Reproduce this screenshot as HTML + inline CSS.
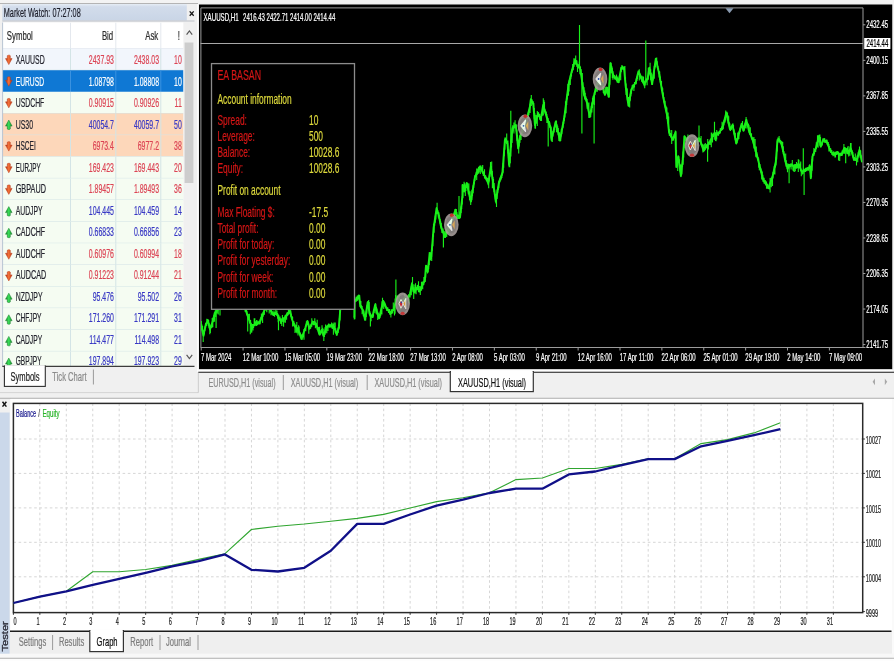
<!DOCTYPE html>
<html lang="en">
<head>
<meta charset="utf-8">
<title>Strategy Tester - XAUUSD,H1</title>
<style>
html,body{margin:0;padding:0;background:#f0f0f0;overflow:hidden}
svg{display:block;font-family:'Liberation Sans', sans-serif;will-change:transform}
</style>
</head>
<body>
<svg width="894" height="661" viewBox="0 0 894 661">
<rect x="0.00" y="0.00" width="894.00" height="661.00" fill="#f0f0f0"/>
<rect x="0.00" y="0.00" width="894.00" height="3.20" fill="#f3f3f3"/>
<line x1="0.00" y1="3.50" x2="198.00" y2="3.50" stroke="#b4b4b4" stroke-width="1"/>
<defs><linearGradient id="tb" x1="0" y1="0" x2="0" y2="1"><stop offset="0" stop-color="#e6edf5"/><stop offset="0.17" stop-color="#d2dceb"/><stop offset="1" stop-color="#c9d5e6"/></linearGradient></defs>
<rect x="2.30" y="4.00" width="184.50" height="16.50" fill="url(#tb)"/>
<line x1="2.30" y1="21.00" x2="194.50" y2="21.00" stroke="#bcc0c8" stroke-width="1"/>
<text x="3.80" y="16.98" textLength="76.90" lengthAdjust="spacingAndGlyphs" font-size="13" fill="#1c1e2a" stroke="#1c1e2a" stroke-width="0.22">Market Watch: 07:27:08</text>
<path d="M189.7,11.4 L193.7,15.8 M193.7,11.4 L189.7,15.8" stroke="#151515" stroke-width="1.3" fill="none"/>
<rect x="2.30" y="22.50" width="181.30" height="343.50" fill="#ffffff"/>
<defs><linearGradient id="ad" x1="0" y1="0" x2="1" y2="0"><stop offset="0" stop-color="#b8300e"/><stop offset="0.5" stop-color="#f6743a"/><stop offset="1" stop-color="#b8300e"/></linearGradient><linearGradient id="au" x1="0" y1="0" x2="1" y2="0"><stop offset="0" stop-color="#148a2c"/><stop offset="0.5" stop-color="#3be05a"/><stop offset="1" stop-color="#148a2c"/></linearGradient><clipPath id="tbclip"><rect x="2.3" y="22.5" width="181.29999999999998" height="343.5"/></clipPath></defs>
<g clip-path="url(#tbclip)">
<text transform="translate(6.80,40.09) scale(0.6,1)" font-size="13" fill="#2a2a2a" stroke="#2a2a2a" stroke-width="0.22">Symbol</text>
<text transform="translate(113.20,40.09) scale(0.6,1)" font-size="13" fill="#2a2a2a" text-anchor="end" stroke="#2a2a2a" stroke-width="0.22">Bid</text>
<text transform="translate(158.20,40.09) scale(0.6,1)" font-size="13" fill="#2a2a2a" text-anchor="end" stroke="#2a2a2a" stroke-width="0.22">Ask</text>
<text transform="translate(180.00,40.09) scale(0.6,1)" font-size="13" fill="#2a2a2a" text-anchor="end" stroke="#2a2a2a" stroke-width="0.22">!</text>
<line x1="70.50" y1="22.50" x2="70.50" y2="48.60" stroke="#e4e8ee" stroke-width="1"/>
<line x1="115.80" y1="22.50" x2="115.80" y2="48.60" stroke="#e4e8ee" stroke-width="1"/>
<line x1="160.80" y1="22.50" x2="160.80" y2="48.60" stroke="#e4e8ee" stroke-width="1"/>
<line x1="2.30" y1="48.60" x2="183.60" y2="48.60" stroke="#e0e6ee" stroke-width="1"/>
<rect x="2.30" y="48.60" width="181.30" height="21.63" fill="#f2f6fc"/>
<line x1="2.30" y1="70.23" x2="183.60" y2="70.23" stroke="#d3e4e6" stroke-width="1"/>
<line x1="70.50" y1="48.60" x2="70.50" y2="70.23" stroke="#d3e4e6" stroke-width="1"/>
<line x1="115.80" y1="48.60" x2="115.80" y2="70.23" stroke="#d3e4e6" stroke-width="1"/>
<line x1="160.80" y1="48.60" x2="160.80" y2="70.23" stroke="#d3e4e6" stroke-width="1"/>
<polygon points="7.30,55.70 8.00,55.20 9.60,55.20 10.30,55.70 10.30,58.60 12.10,58.60 8.80,64.60 5.50,58.60 7.30,58.60" fill="url(#ad)" stroke="#b83a1c" stroke-width="0.5" stroke-linejoin="round"/>
<text x="15.70" y="64.09" textLength="29.00" lengthAdjust="spacingAndGlyphs" font-size="13" fill="#24242e" stroke="#24242e" stroke-width="0.22">XAUUSD</text>
<text transform="translate(113.90,64.09) scale(0.535,1)" font-size="13" fill="#dc4454" text-anchor="end" stroke="#dc4454" stroke-width="0.22">2437.93</text>
<text transform="translate(159.00,64.09) scale(0.535,1)" font-size="13" fill="#dc4454" text-anchor="end" stroke="#dc4454" stroke-width="0.22">2438.03</text>
<text transform="translate(181.80,64.09) scale(0.535,1)" font-size="13" fill="#dc4454" text-anchor="end" stroke="#dc4454" stroke-width="0.22">10</text>
<rect x="2.30" y="70.23" width="181.30" height="21.63" fill="#0f78d4"/>
<line x1="70.50" y1="70.23" x2="70.50" y2="91.86" stroke="#3a92e0" stroke-width="1"/>
<line x1="115.80" y1="70.23" x2="115.80" y2="91.86" stroke="#3a92e0" stroke-width="1"/>
<line x1="160.80" y1="70.23" x2="160.80" y2="91.86" stroke="#3a92e0" stroke-width="1"/>
<polygon points="7.30,77.33 8.00,76.83 9.60,76.83 10.30,77.33 10.30,80.23 12.10,80.23 8.80,86.23 5.50,80.23 7.30,80.23" fill="url(#ad)" stroke="#b83a1c" stroke-width="0.5" stroke-linejoin="round"/>
<text x="15.70" y="85.61" textLength="28.30" lengthAdjust="spacingAndGlyphs" font-size="13" fill="#ffffff" stroke="#ffffff" stroke-width="0.22">EURUSD</text>
<text transform="translate(113.90,85.61) scale(0.535,1)" font-size="13" fill="#ffffff" text-anchor="end" stroke="#ffffff" stroke-width="0.22">1.08798</text>
<text transform="translate(159.00,85.61) scale(0.535,1)" font-size="13" fill="#ffffff" text-anchor="end" stroke="#ffffff" stroke-width="0.22">1.08808</text>
<text transform="translate(181.80,85.61) scale(0.535,1)" font-size="13" fill="#ffffff" text-anchor="end" stroke="#ffffff" stroke-width="0.22">10</text>
<rect x="2.30" y="91.86" width="181.30" height="21.63" fill="#f5fcf2"/>
<line x1="2.30" y1="113.49" x2="183.60" y2="113.49" stroke="#d3e4e6" stroke-width="1"/>
<line x1="70.50" y1="91.86" x2="70.50" y2="113.49" stroke="#d3e4e6" stroke-width="1"/>
<line x1="115.80" y1="91.86" x2="115.80" y2="113.49" stroke="#d3e4e6" stroke-width="1"/>
<line x1="160.80" y1="91.86" x2="160.80" y2="113.49" stroke="#d3e4e6" stroke-width="1"/>
<polygon points="7.30,98.96 8.00,98.46 9.60,98.46 10.30,98.96 10.30,101.86 12.10,101.86 8.80,107.86 5.50,101.86 7.30,101.86" fill="url(#ad)" stroke="#b83a1c" stroke-width="0.5" stroke-linejoin="round"/>
<text x="15.70" y="107.12" textLength="28.60" lengthAdjust="spacingAndGlyphs" font-size="13" fill="#24242e" stroke="#24242e" stroke-width="0.22">USDCHF</text>
<text transform="translate(113.90,107.12) scale(0.535,1)" font-size="13" fill="#dc4454" text-anchor="end" stroke="#dc4454" stroke-width="0.22">0.90915</text>
<text transform="translate(159.00,107.12) scale(0.535,1)" font-size="13" fill="#dc4454" text-anchor="end" stroke="#dc4454" stroke-width="0.22">0.90926</text>
<text transform="translate(181.80,107.12) scale(0.535,1)" font-size="13" fill="#dc4454" text-anchor="end" stroke="#dc4454" stroke-width="0.22">11</text>
<rect x="2.30" y="113.49" width="181.30" height="21.63" fill="#fdd7ba"/>
<line x1="2.30" y1="135.12" x2="183.60" y2="135.12" stroke="#d3e4e6" stroke-width="1"/>
<line x1="70.50" y1="113.49" x2="70.50" y2="135.12" stroke="#d3e4e6" stroke-width="1"/>
<line x1="115.80" y1="113.49" x2="115.80" y2="135.12" stroke="#d3e4e6" stroke-width="1"/>
<line x1="160.80" y1="113.49" x2="160.80" y2="135.12" stroke="#d3e4e6" stroke-width="1"/>
<polygon points="7.30,128.99 8.00,129.49 9.60,129.49 10.30,128.99 10.30,126.09 12.10,126.09 8.80,120.09 5.50,126.09 7.30,126.09" fill="url(#au)" stroke="#1a7a2c" stroke-width="0.5" stroke-linejoin="round"/>
<text x="15.70" y="128.65" textLength="17.40" lengthAdjust="spacingAndGlyphs" font-size="13" fill="#24242e" stroke="#24242e" stroke-width="0.22">US30</text>
<text transform="translate(113.90,128.65) scale(0.535,1)" font-size="13" fill="#3838c4" text-anchor="end" stroke="#3838c4" stroke-width="0.22">40054.7</text>
<text transform="translate(159.00,128.65) scale(0.535,1)" font-size="13" fill="#3838c4" text-anchor="end" stroke="#3838c4" stroke-width="0.22">40059.7</text>
<text transform="translate(181.80,128.65) scale(0.535,1)" font-size="13" fill="#3838c4" text-anchor="end" stroke="#3838c4" stroke-width="0.22">50</text>
<rect x="2.30" y="135.12" width="181.30" height="21.63" fill="#fdd7ba"/>
<line x1="2.30" y1="156.75" x2="183.60" y2="156.75" stroke="#d3e4e6" stroke-width="1"/>
<line x1="70.50" y1="135.12" x2="70.50" y2="156.75" stroke="#d3e4e6" stroke-width="1"/>
<line x1="115.80" y1="135.12" x2="115.80" y2="156.75" stroke="#d3e4e6" stroke-width="1"/>
<line x1="160.80" y1="135.12" x2="160.80" y2="156.75" stroke="#d3e4e6" stroke-width="1"/>
<polygon points="7.30,142.22 8.00,141.72 9.60,141.72 10.30,142.22 10.30,145.12 12.10,145.12 8.80,151.12 5.50,145.12 7.30,145.12" fill="url(#ad)" stroke="#b83a1c" stroke-width="0.5" stroke-linejoin="round"/>
<text x="15.70" y="150.17" textLength="20.10" lengthAdjust="spacingAndGlyphs" font-size="13" fill="#24242e" stroke="#24242e" stroke-width="0.22">HSCEI</text>
<text transform="translate(113.90,150.17) scale(0.535,1)" font-size="13" fill="#dc4454" text-anchor="end" stroke="#dc4454" stroke-width="0.22">6973.4</text>
<text transform="translate(159.00,150.17) scale(0.535,1)" font-size="13" fill="#dc4454" text-anchor="end" stroke="#dc4454" stroke-width="0.22">6977.2</text>
<text transform="translate(181.80,150.17) scale(0.535,1)" font-size="13" fill="#dc4454" text-anchor="end" stroke="#dc4454" stroke-width="0.22">38</text>
<rect x="2.30" y="156.75" width="181.30" height="21.63" fill="#f5fcf2"/>
<line x1="2.30" y1="178.38" x2="183.60" y2="178.38" stroke="#d3e4e6" stroke-width="1"/>
<line x1="70.50" y1="156.75" x2="70.50" y2="178.38" stroke="#d3e4e6" stroke-width="1"/>
<line x1="115.80" y1="156.75" x2="115.80" y2="178.38" stroke="#d3e4e6" stroke-width="1"/>
<line x1="160.80" y1="156.75" x2="160.80" y2="178.38" stroke="#d3e4e6" stroke-width="1"/>
<polygon points="7.30,163.85 8.00,163.35 9.60,163.35 10.30,163.85 10.30,166.75 12.10,166.75 8.80,172.75 5.50,166.75 7.30,166.75" fill="url(#ad)" stroke="#b83a1c" stroke-width="0.5" stroke-linejoin="round"/>
<text x="15.70" y="171.69" textLength="25.00" lengthAdjust="spacingAndGlyphs" font-size="13" fill="#24242e" stroke="#24242e" stroke-width="0.22">EURJPY</text>
<text transform="translate(113.90,171.69) scale(0.535,1)" font-size="13" fill="#dc4454" text-anchor="end" stroke="#dc4454" stroke-width="0.22">169.423</text>
<text transform="translate(159.00,171.69) scale(0.535,1)" font-size="13" fill="#dc4454" text-anchor="end" stroke="#dc4454" stroke-width="0.22">169.443</text>
<text transform="translate(181.80,171.69) scale(0.535,1)" font-size="13" fill="#dc4454" text-anchor="end" stroke="#dc4454" stroke-width="0.22">20</text>
<rect x="2.30" y="178.38" width="181.30" height="21.63" fill="#f5fcf2"/>
<line x1="2.30" y1="200.01" x2="183.60" y2="200.01" stroke="#d3e4e6" stroke-width="1"/>
<line x1="70.50" y1="178.38" x2="70.50" y2="200.01" stroke="#d3e4e6" stroke-width="1"/>
<line x1="115.80" y1="178.38" x2="115.80" y2="200.01" stroke="#d3e4e6" stroke-width="1"/>
<line x1="160.80" y1="178.38" x2="160.80" y2="200.01" stroke="#d3e4e6" stroke-width="1"/>
<polygon points="7.30,185.48 8.00,184.98 9.60,184.98 10.30,185.48 10.30,188.38 12.10,188.38 8.80,194.38 5.50,188.38 7.30,188.38" fill="url(#ad)" stroke="#b83a1c" stroke-width="0.5" stroke-linejoin="round"/>
<text x="15.70" y="193.20" textLength="30.20" lengthAdjust="spacingAndGlyphs" font-size="13" fill="#24242e" stroke="#24242e" stroke-width="0.22">GBPAUD</text>
<text transform="translate(113.90,193.20) scale(0.535,1)" font-size="13" fill="#dc4454" text-anchor="end" stroke="#dc4454" stroke-width="0.22">1.89457</text>
<text transform="translate(159.00,193.20) scale(0.535,1)" font-size="13" fill="#dc4454" text-anchor="end" stroke="#dc4454" stroke-width="0.22">1.89493</text>
<text transform="translate(181.80,193.20) scale(0.535,1)" font-size="13" fill="#dc4454" text-anchor="end" stroke="#dc4454" stroke-width="0.22">36</text>
<rect x="2.30" y="200.01" width="181.30" height="21.63" fill="#f5fcf2"/>
<line x1="2.30" y1="221.64" x2="183.60" y2="221.64" stroke="#d3e4e6" stroke-width="1"/>
<line x1="70.50" y1="200.01" x2="70.50" y2="221.64" stroke="#d3e4e6" stroke-width="1"/>
<line x1="115.80" y1="200.01" x2="115.80" y2="221.64" stroke="#d3e4e6" stroke-width="1"/>
<line x1="160.80" y1="200.01" x2="160.80" y2="221.64" stroke="#d3e4e6" stroke-width="1"/>
<polygon points="7.30,215.51 8.00,216.01 9.60,216.01 10.30,215.51 10.30,212.61 12.10,212.61 8.80,206.61 5.50,212.61 7.30,212.61" fill="url(#au)" stroke="#1a7a2c" stroke-width="0.5" stroke-linejoin="round"/>
<text x="15.70" y="214.72" textLength="26.80" lengthAdjust="spacingAndGlyphs" font-size="13" fill="#24242e" stroke="#24242e" stroke-width="0.22">AUDJPY</text>
<text transform="translate(113.90,214.72) scale(0.535,1)" font-size="13" fill="#3838c4" text-anchor="end" stroke="#3838c4" stroke-width="0.22">104.445</text>
<text transform="translate(159.00,214.72) scale(0.535,1)" font-size="13" fill="#3838c4" text-anchor="end" stroke="#3838c4" stroke-width="0.22">104.459</text>
<text transform="translate(181.80,214.72) scale(0.535,1)" font-size="13" fill="#3838c4" text-anchor="end" stroke="#3838c4" stroke-width="0.22">14</text>
<rect x="2.30" y="221.64" width="181.30" height="21.63" fill="#f5fcf2"/>
<line x1="2.30" y1="243.27" x2="183.60" y2="243.27" stroke="#d3e4e6" stroke-width="1"/>
<line x1="70.50" y1="221.64" x2="70.50" y2="243.27" stroke="#d3e4e6" stroke-width="1"/>
<line x1="115.80" y1="221.64" x2="115.80" y2="243.27" stroke="#d3e4e6" stroke-width="1"/>
<line x1="160.80" y1="221.64" x2="160.80" y2="243.27" stroke="#d3e4e6" stroke-width="1"/>
<polygon points="7.30,237.14 8.00,237.64 9.60,237.64 10.30,237.14 10.30,234.24 12.10,234.24 8.80,228.24 5.50,234.24 7.30,234.24" fill="url(#au)" stroke="#1a7a2c" stroke-width="0.5" stroke-linejoin="round"/>
<text x="15.70" y="236.25" textLength="29.50" lengthAdjust="spacingAndGlyphs" font-size="13" fill="#24242e" stroke="#24242e" stroke-width="0.22">CADCHF</text>
<text transform="translate(113.90,236.25) scale(0.535,1)" font-size="13" fill="#3838c4" text-anchor="end" stroke="#3838c4" stroke-width="0.22">0.66833</text>
<text transform="translate(159.00,236.25) scale(0.535,1)" font-size="13" fill="#3838c4" text-anchor="end" stroke="#3838c4" stroke-width="0.22">0.66856</text>
<text transform="translate(181.80,236.25) scale(0.535,1)" font-size="13" fill="#3838c4" text-anchor="end" stroke="#3838c4" stroke-width="0.22">23</text>
<rect x="2.30" y="243.27" width="181.30" height="21.63" fill="#f5fcf2"/>
<line x1="2.30" y1="264.90" x2="183.60" y2="264.90" stroke="#d3e4e6" stroke-width="1"/>
<line x1="70.50" y1="243.27" x2="70.50" y2="264.90" stroke="#d3e4e6" stroke-width="1"/>
<line x1="115.80" y1="243.27" x2="115.80" y2="264.90" stroke="#d3e4e6" stroke-width="1"/>
<line x1="160.80" y1="243.27" x2="160.80" y2="264.90" stroke="#d3e4e6" stroke-width="1"/>
<polygon points="7.30,250.37 8.00,249.87 9.60,249.87 10.30,250.37 10.30,253.27 12.10,253.27 8.80,259.27 5.50,253.27 7.30,253.27" fill="url(#ad)" stroke="#b83a1c" stroke-width="0.5" stroke-linejoin="round"/>
<text x="15.70" y="257.76" textLength="29.50" lengthAdjust="spacingAndGlyphs" font-size="13" fill="#24242e" stroke="#24242e" stroke-width="0.22">AUDCHF</text>
<text transform="translate(113.90,257.76) scale(0.535,1)" font-size="13" fill="#dc4454" text-anchor="end" stroke="#dc4454" stroke-width="0.22">0.60976</text>
<text transform="translate(159.00,257.76) scale(0.535,1)" font-size="13" fill="#dc4454" text-anchor="end" stroke="#dc4454" stroke-width="0.22">0.60994</text>
<text transform="translate(181.80,257.76) scale(0.535,1)" font-size="13" fill="#dc4454" text-anchor="end" stroke="#dc4454" stroke-width="0.22">18</text>
<rect x="2.30" y="264.90" width="181.30" height="21.63" fill="#f5fcf2"/>
<line x1="2.30" y1="286.53" x2="183.60" y2="286.53" stroke="#d3e4e6" stroke-width="1"/>
<line x1="70.50" y1="264.90" x2="70.50" y2="286.53" stroke="#d3e4e6" stroke-width="1"/>
<line x1="115.80" y1="264.90" x2="115.80" y2="286.53" stroke="#d3e4e6" stroke-width="1"/>
<line x1="160.80" y1="264.90" x2="160.80" y2="286.53" stroke="#d3e4e6" stroke-width="1"/>
<polygon points="7.30,272.00 8.00,271.50 9.60,271.50 10.30,272.00 10.30,274.90 12.10,274.90 8.80,280.90 5.50,274.90 7.30,274.90" fill="url(#ad)" stroke="#b83a1c" stroke-width="0.5" stroke-linejoin="round"/>
<text x="15.70" y="279.28" textLength="30.50" lengthAdjust="spacingAndGlyphs" font-size="13" fill="#24242e" stroke="#24242e" stroke-width="0.22">AUDCAD</text>
<text transform="translate(113.90,279.28) scale(0.535,1)" font-size="13" fill="#dc4454" text-anchor="end" stroke="#dc4454" stroke-width="0.22">0.91223</text>
<text transform="translate(159.00,279.28) scale(0.535,1)" font-size="13" fill="#dc4454" text-anchor="end" stroke="#dc4454" stroke-width="0.22">0.91244</text>
<text transform="translate(181.80,279.28) scale(0.535,1)" font-size="13" fill="#dc4454" text-anchor="end" stroke="#dc4454" stroke-width="0.22">21</text>
<rect x="2.30" y="286.53" width="181.30" height="21.63" fill="#f5fcf2"/>
<line x1="2.30" y1="308.16" x2="183.60" y2="308.16" stroke="#d3e4e6" stroke-width="1"/>
<line x1="70.50" y1="286.53" x2="70.50" y2="308.16" stroke="#d3e4e6" stroke-width="1"/>
<line x1="115.80" y1="286.53" x2="115.80" y2="308.16" stroke="#d3e4e6" stroke-width="1"/>
<line x1="160.80" y1="286.53" x2="160.80" y2="308.16" stroke="#d3e4e6" stroke-width="1"/>
<polygon points="7.30,302.03 8.00,302.53 9.60,302.53 10.30,302.03 10.30,299.13 12.10,299.13 8.80,293.13 5.50,299.13 7.30,299.13" fill="url(#au)" stroke="#1a7a2c" stroke-width="0.5" stroke-linejoin="round"/>
<text x="15.70" y="300.81" textLength="26.80" lengthAdjust="spacingAndGlyphs" font-size="13" fill="#24242e" stroke="#24242e" stroke-width="0.22">NZDJPY</text>
<text transform="translate(113.90,300.81) scale(0.535,1)" font-size="13" fill="#3838c4" text-anchor="end" stroke="#3838c4" stroke-width="0.22">95.476</text>
<text transform="translate(159.00,300.81) scale(0.535,1)" font-size="13" fill="#3838c4" text-anchor="end" stroke="#3838c4" stroke-width="0.22">95.502</text>
<text transform="translate(181.80,300.81) scale(0.535,1)" font-size="13" fill="#3838c4" text-anchor="end" stroke="#3838c4" stroke-width="0.22">26</text>
<rect x="2.30" y="308.16" width="181.30" height="21.63" fill="#f5fcf2"/>
<line x1="2.30" y1="329.79" x2="183.60" y2="329.79" stroke="#d3e4e6" stroke-width="1"/>
<line x1="70.50" y1="308.16" x2="70.50" y2="329.79" stroke="#d3e4e6" stroke-width="1"/>
<line x1="115.80" y1="308.16" x2="115.80" y2="329.79" stroke="#d3e4e6" stroke-width="1"/>
<line x1="160.80" y1="308.16" x2="160.80" y2="329.79" stroke="#d3e4e6" stroke-width="1"/>
<polygon points="7.30,323.66 8.00,324.16 9.60,324.16 10.30,323.66 10.30,320.76 12.10,320.76 8.80,314.76 5.50,320.76 7.30,320.76" fill="url(#au)" stroke="#1a7a2c" stroke-width="0.5" stroke-linejoin="round"/>
<text x="15.70" y="322.33" textLength="25.80" lengthAdjust="spacingAndGlyphs" font-size="13" fill="#24242e" stroke="#24242e" stroke-width="0.22">CHFJPY</text>
<text transform="translate(113.90,322.33) scale(0.535,1)" font-size="13" fill="#3838c4" text-anchor="end" stroke="#3838c4" stroke-width="0.22">171.260</text>
<text transform="translate(159.00,322.33) scale(0.535,1)" font-size="13" fill="#3838c4" text-anchor="end" stroke="#3838c4" stroke-width="0.22">171.291</text>
<text transform="translate(181.80,322.33) scale(0.535,1)" font-size="13" fill="#3838c4" text-anchor="end" stroke="#3838c4" stroke-width="0.22">31</text>
<rect x="2.30" y="329.79" width="181.30" height="21.63" fill="#f5fcf2"/>
<line x1="2.30" y1="351.42" x2="183.60" y2="351.42" stroke="#d3e4e6" stroke-width="1"/>
<line x1="70.50" y1="329.79" x2="70.50" y2="351.42" stroke="#d3e4e6" stroke-width="1"/>
<line x1="115.80" y1="329.79" x2="115.80" y2="351.42" stroke="#d3e4e6" stroke-width="1"/>
<line x1="160.80" y1="329.79" x2="160.80" y2="351.42" stroke="#d3e4e6" stroke-width="1"/>
<polygon points="7.30,345.29 8.00,345.79 9.60,345.79 10.30,345.29 10.30,342.39 12.10,342.39 8.80,336.39 5.50,342.39 7.30,342.39" fill="url(#au)" stroke="#1a7a2c" stroke-width="0.5" stroke-linejoin="round"/>
<text x="15.70" y="343.85" textLength="26.50" lengthAdjust="spacingAndGlyphs" font-size="13" fill="#24242e" stroke="#24242e" stroke-width="0.22">CADJPY</text>
<text transform="translate(113.90,343.85) scale(0.535,1)" font-size="13" fill="#3838c4" text-anchor="end" stroke="#3838c4" stroke-width="0.22">114.477</text>
<text transform="translate(159.00,343.85) scale(0.535,1)" font-size="13" fill="#3838c4" text-anchor="end" stroke="#3838c4" stroke-width="0.22">114.498</text>
<text transform="translate(181.80,343.85) scale(0.535,1)" font-size="13" fill="#3838c4" text-anchor="end" stroke="#3838c4" stroke-width="0.22">21</text>
<rect x="2.30" y="351.42" width="181.30" height="21.63" fill="#f5fcf2"/>
<line x1="2.30" y1="373.05" x2="183.60" y2="373.05" stroke="#d3e4e6" stroke-width="1"/>
<line x1="70.50" y1="351.42" x2="70.50" y2="373.05" stroke="#d3e4e6" stroke-width="1"/>
<line x1="115.80" y1="351.42" x2="115.80" y2="373.05" stroke="#d3e4e6" stroke-width="1"/>
<line x1="160.80" y1="351.42" x2="160.80" y2="373.05" stroke="#d3e4e6" stroke-width="1"/>
<polygon points="7.30,366.92 8.00,367.42 9.60,367.42 10.30,366.92 10.30,364.02 12.10,364.02 8.80,358.02 5.50,364.02 7.30,364.02" fill="url(#au)" stroke="#1a7a2c" stroke-width="0.5" stroke-linejoin="round"/>
<text x="15.70" y="365.37" textLength="25.80" lengthAdjust="spacingAndGlyphs" font-size="13" fill="#24242e" stroke="#24242e" stroke-width="0.22">GBPJPY</text>
<text transform="translate(113.90,365.37) scale(0.535,1)" font-size="13" fill="#3838c4" text-anchor="end" stroke="#3838c4" stroke-width="0.22">197.894</text>
<text transform="translate(159.00,365.37) scale(0.535,1)" font-size="13" fill="#3838c4" text-anchor="end" stroke="#3838c4" stroke-width="0.22">197.923</text>
<text transform="translate(181.80,365.37) scale(0.535,1)" font-size="13" fill="#3838c4" text-anchor="end" stroke="#3838c4" stroke-width="0.22">29</text>
</g>
<line x1="2.60" y1="22.50" x2="2.60" y2="366.00" stroke="#b8c4d2" stroke-width="1"/>
<rect x="183.60" y="22.50" width="10.60" height="343.50" fill="#f0f0f0"/>
<rect x="184.60" y="42.50" width="8.80" height="140.50" fill="#cdcdcd"/>
<polyline points="186.6,34.6 189.4,31.0 192.2,34.6" fill="none" stroke="#555" stroke-width="1.2"/>
<polyline points="186.6,354.9 189.4,358.5 192.2,354.9" fill="none" stroke="#555" stroke-width="1.2"/>
<line x1="2.30" y1="366.30" x2="194.50" y2="366.30" stroke="#3c3c3c" stroke-width="1.2"/>
<rect x="4.40" y="366.00" width="40.90" height="20.40" fill="#ffffff" stroke="#2e2e2e" stroke-width="1.1"/>
<rect x="5.00" y="365.20" width="39.70" height="1.80" fill="#ffffff"/>
<text transform="translate(10.50,380.79) scale(0.585,1)" font-size="13" fill="#222" stroke="#222" stroke-width="0.22">Symbols</text>
<text transform="translate(52.30,380.79) scale(0.585,1)" font-size="13" fill="#8a8a8a" stroke="#8a8a8a" stroke-width="0.22">Tick Chart</text>
<line x1="93.40" y1="369.50" x2="93.40" y2="384.50" stroke="#9a9a9a" stroke-width="1"/>
<line x1="197.60" y1="4.00" x2="197.60" y2="392.00" stroke="#fbfbfb" stroke-width="1.2"/>
<line x1="0.00" y1="392.60" x2="198.40" y2="392.60" stroke="#d4d4d4" stroke-width="1"/>
<line x1="198.20" y1="372.00" x2="198.20" y2="392.60" stroke="#c4c4c4" stroke-width="1"/>
<line x1="0.00" y1="398.30" x2="894.00" y2="398.30" stroke="#a2a2a2" stroke-width="1"/>
<rect x="199.00" y="4.50" width="693.50" height="364.90" fill="#000000"/>
<rect x="892.50" y="3.00" width="1.50" height="368.00" fill="#f4f4f4"/>
<rect x="198.40" y="369.40" width="694.10" height="2.40" fill="#fdfdfd"/>
<line x1="198.40" y1="372.30" x2="894.00" y2="372.30" stroke="#1a1a1a" stroke-width="1.1"/>
<line x1="200.90" y1="7.90" x2="863.00" y2="7.90" stroke="#9c9c9c" stroke-width="1"/>
<line x1="200.90" y1="7.90" x2="200.90" y2="347.50" stroke="#9c9c9c" stroke-width="1"/>
<line x1="863.00" y1="7.90" x2="863.00" y2="348.00" stroke="#9c9c9c" stroke-width="1.0"/>
<line x1="200.50" y1="347.50" x2="865.50" y2="347.50" stroke="#9c9c9c" stroke-width="1.1"/>
<polygon points="725.5,8.2 733.5,8.2 729.5,13.2" fill="#8a9bb0"/>
<line x1="200.50" y1="43.50" x2="863.00" y2="43.50" stroke="#a8a8a8" stroke-width="1"/>
<text x="203.50" y="20.52" textLength="35.20" lengthAdjust="spacingAndGlyphs" font-size="10.5" fill="#ffffff" stroke="#ffffff" stroke-width="0.22">XAUUSD,H1</text>
<text x="243.10" y="20.52" textLength="92.20" lengthAdjust="spacingAndGlyphs" font-size="10.5" fill="#ffffff" stroke="#ffffff" stroke-width="0.22">2416.43 2422.71 2414.00 2414.44</text>
<line x1="863.00" y1="24.80" x2="865.40" y2="24.80" stroke="#9c9c9c" stroke-width="1"/>
<text transform="translate(866.30,28.42) scale(0.575,1)" font-size="10.5" fill="#ffffff" stroke="#ffffff" stroke-width="0.22">2432.45</text>
<line x1="863.00" y1="60.33" x2="865.40" y2="60.33" stroke="#9c9c9c" stroke-width="1"/>
<text transform="translate(866.30,63.95) scale(0.575,1)" font-size="10.5" fill="#ffffff" stroke="#ffffff" stroke-width="0.22">2400.15</text>
<line x1="863.00" y1="95.86" x2="865.40" y2="95.86" stroke="#9c9c9c" stroke-width="1"/>
<text transform="translate(866.30,99.48) scale(0.575,1)" font-size="10.5" fill="#ffffff" stroke="#ffffff" stroke-width="0.22">2367.85</text>
<line x1="863.00" y1="131.39" x2="865.40" y2="131.39" stroke="#9c9c9c" stroke-width="1"/>
<text transform="translate(866.30,135.01) scale(0.575,1)" font-size="10.5" fill="#ffffff" stroke="#ffffff" stroke-width="0.22">2335.55</text>
<line x1="863.00" y1="166.92" x2="865.40" y2="166.92" stroke="#9c9c9c" stroke-width="1"/>
<text transform="translate(866.30,170.54) scale(0.575,1)" font-size="10.5" fill="#ffffff" stroke="#ffffff" stroke-width="0.22">2303.25</text>
<line x1="863.00" y1="202.45" x2="865.40" y2="202.45" stroke="#9c9c9c" stroke-width="1"/>
<text transform="translate(866.30,206.07) scale(0.575,1)" font-size="10.5" fill="#ffffff" stroke="#ffffff" stroke-width="0.22">2270.95</text>
<line x1="863.00" y1="237.98" x2="865.40" y2="237.98" stroke="#9c9c9c" stroke-width="1"/>
<text transform="translate(866.30,241.60) scale(0.575,1)" font-size="10.5" fill="#ffffff" stroke="#ffffff" stroke-width="0.22">2238.65</text>
<line x1="863.00" y1="273.51" x2="865.40" y2="273.51" stroke="#9c9c9c" stroke-width="1"/>
<text transform="translate(866.30,277.13) scale(0.575,1)" font-size="10.5" fill="#ffffff" stroke="#ffffff" stroke-width="0.22">2206.35</text>
<line x1="863.00" y1="309.04" x2="865.40" y2="309.04" stroke="#9c9c9c" stroke-width="1"/>
<text transform="translate(866.30,312.66) scale(0.575,1)" font-size="10.5" fill="#ffffff" stroke="#ffffff" stroke-width="0.22">2174.05</text>
<line x1="863.00" y1="344.57" x2="865.40" y2="344.57" stroke="#9c9c9c" stroke-width="1"/>
<text transform="translate(866.30,348.19) scale(0.575,1)" font-size="10.5" fill="#ffffff" stroke="#ffffff" stroke-width="0.22">2141.75</text>
<rect x="864.20" y="38.00" width="26.20" height="11.00" fill="#ffffff"/>
<text transform="translate(866.50,47.22) scale(0.575,1)" font-size="10.5" fill="#000000" stroke="#000000" stroke-width="0.22">2414.44</text>
<line x1="201.20" y1="347.50" x2="201.20" y2="350.50" stroke="#9c9c9c" stroke-width="1"/>
<text transform="translate(200.90,361.12) scale(0.574,1)" font-size="10.5" fill="#ffffff" stroke="#ffffff" stroke-width="0.22">7 Mar 2024</text>
<line x1="243.08" y1="347.50" x2="243.08" y2="350.50" stroke="#9c9c9c" stroke-width="1"/>
<text transform="translate(242.78,361.12) scale(0.574,1)" font-size="10.5" fill="#ffffff" stroke="#ffffff" stroke-width="0.22">12 Mar 10:00</text>
<line x1="284.96" y1="347.50" x2="284.96" y2="350.50" stroke="#9c9c9c" stroke-width="1"/>
<text transform="translate(284.66,361.12) scale(0.574,1)" font-size="10.5" fill="#ffffff" stroke="#ffffff" stroke-width="0.22">15 Mar 05:00</text>
<line x1="326.84" y1="347.50" x2="326.84" y2="350.50" stroke="#9c9c9c" stroke-width="1"/>
<text transform="translate(326.54,361.12) scale(0.574,1)" font-size="10.5" fill="#ffffff" stroke="#ffffff" stroke-width="0.22">19 Mar 23:00</text>
<line x1="368.72" y1="347.50" x2="368.72" y2="350.50" stroke="#9c9c9c" stroke-width="1"/>
<text transform="translate(368.42,361.12) scale(0.574,1)" font-size="10.5" fill="#ffffff" stroke="#ffffff" stroke-width="0.22">22 Mar 18:00</text>
<line x1="410.60" y1="347.50" x2="410.60" y2="350.50" stroke="#9c9c9c" stroke-width="1"/>
<text transform="translate(410.30,361.12) scale(0.574,1)" font-size="10.5" fill="#ffffff" stroke="#ffffff" stroke-width="0.22">27 Mar 13:00</text>
<line x1="452.48" y1="347.50" x2="452.48" y2="350.50" stroke="#9c9c9c" stroke-width="1"/>
<text transform="translate(452.18,361.12) scale(0.574,1)" font-size="10.5" fill="#ffffff" stroke="#ffffff" stroke-width="0.22">2 Apr 08:00</text>
<line x1="494.36" y1="347.50" x2="494.36" y2="350.50" stroke="#9c9c9c" stroke-width="1"/>
<text transform="translate(494.06,361.12) scale(0.574,1)" font-size="10.5" fill="#ffffff" stroke="#ffffff" stroke-width="0.22">5 Apr 03:00</text>
<line x1="536.24" y1="347.50" x2="536.24" y2="350.50" stroke="#9c9c9c" stroke-width="1"/>
<text transform="translate(535.94,361.12) scale(0.574,1)" font-size="10.5" fill="#ffffff" stroke="#ffffff" stroke-width="0.22">9 Apr 21:00</text>
<line x1="578.12" y1="347.50" x2="578.12" y2="350.50" stroke="#9c9c9c" stroke-width="1"/>
<text transform="translate(577.82,361.12) scale(0.574,1)" font-size="10.5" fill="#ffffff" stroke="#ffffff" stroke-width="0.22">12 Apr 16:00</text>
<line x1="620.00" y1="347.50" x2="620.00" y2="350.50" stroke="#9c9c9c" stroke-width="1"/>
<text transform="translate(619.70,361.12) scale(0.574,1)" font-size="10.5" fill="#ffffff" stroke="#ffffff" stroke-width="0.22">17 Apr 11:00</text>
<line x1="661.88" y1="347.50" x2="661.88" y2="350.50" stroke="#9c9c9c" stroke-width="1"/>
<text transform="translate(661.58,361.12) scale(0.574,1)" font-size="10.5" fill="#ffffff" stroke="#ffffff" stroke-width="0.22">22 Apr 06:00</text>
<line x1="703.76" y1="347.50" x2="703.76" y2="350.50" stroke="#9c9c9c" stroke-width="1"/>
<text transform="translate(703.46,361.12) scale(0.574,1)" font-size="10.5" fill="#ffffff" stroke="#ffffff" stroke-width="0.22">25 Apr 01:00</text>
<line x1="745.64" y1="347.50" x2="745.64" y2="350.50" stroke="#9c9c9c" stroke-width="1"/>
<text transform="translate(745.34,361.12) scale(0.574,1)" font-size="10.5" fill="#ffffff" stroke="#ffffff" stroke-width="0.22">29 Apr 19:00</text>
<line x1="787.52" y1="347.50" x2="787.52" y2="350.50" stroke="#9c9c9c" stroke-width="1"/>
<text transform="translate(787.22,361.12) scale(0.574,1)" font-size="10.5" fill="#ffffff" stroke="#ffffff" stroke-width="0.22">2 May 14:00</text>
<line x1="829.40" y1="347.50" x2="829.40" y2="350.50" stroke="#9c9c9c" stroke-width="1"/>
<text transform="translate(829.10,361.12) scale(0.574,1)" font-size="10.5" fill="#ffffff" stroke="#ffffff" stroke-width="0.22">7 May 09:00</text>
<defs><clipPath id="chclip"><rect x="201" y="8.5" width="661.5" height="338.5"/></clipPath></defs>
<g clip-path="url(#chclip)">
<path d="M216.1,311.5V328.0M220.0,307.2V315.5M247.7,316.0V331.6M250.3,322.8V334.3M278.5,317.4V330.3" stroke="#19f019" stroke-width="1.15" fill="none"/>
<path d="M201.4,326.2 L203.4,335.6 L206.0,323.5 L208.0,321.0 L210.0,329.6 L212.8,321.0 L214.8,312.8 L217.5,310.0 L222.0,305.0 L232.0,300.0 L243.0,304.0 L245.6,310.0 L248.7,318.9 L251.7,326.2 L255.7,323.5 L259.7,322.2 L262.4,315.5 L264.4,310.0 L267.0,305.0 L270.5,310.0 L273.2,314.8 L275.9,312.8 L280.5,320.9 L283.9,318.9 L287.3,314.8 L289.9,310.8 L292.0,319.5 L294.6,326.2 L298.0,328.9 L301.4,339.0 L305.4,327.6 L307.4,320.9 L309.4,328.9 L312.1,322.9 L316.1,324.9 L316.7,325.7 L319.4,334.4 L322.0,330.4 L323.4,335.8 L326.8,326.4 L331.5,325.0 L334.8,329.0 L336.8,334.4 L338.9,326.4 L340.2,310.3" fill="none" stroke="#19f019" stroke-width="1.9" stroke-linejoin="round" stroke-linecap="round"/>
<path d="M201.4,321.1V327.6M202.0,324.5V330.7M202.6,326.1V332.3M203.2,330.3V342.0M203.8,332.4V336.6M204.4,328.7V334.5M205.0,326.3V330.8M205.6,323.5V328.1M206.2,323.0V326.1M206.8,318.8V325.7M207.4,319.6V323.7M208.0,319.0V322.1M208.6,320.1V325.5M209.2,323.2V328.1M209.8,325.7V334.3M210.4,326.8V333.1M211.0,324.5V328.1M211.6,324.1V327.9M212.2,318.1V327.6M212.8,319.1V327.2M213.4,316.9V322.1M214.0,315.0V318.7M214.6,313.1V321.7M215.2,310.6V315.5M215.8,306.7V316.9M216.4,309.8V312.3M217.0,307.8V313.4M217.6,308.1V310.4M218.2,307.7V314.5M218.8,306.0V310.1M219.4,306.2V308.0M220.0,306.3V308.8M220.6,305.9V309.6M221.2,302.0V308.1M221.8,303.9V307.1M222.4,304.8V306.9M223.0,302.3V307.8M223.6,302.1V305.2M224.2,303.1V305.9M224.8,301.5V306.6M225.4,299.1V305.3M226.0,303.2V306.2M226.6,295.6V304.5M227.2,300.5V303.6M227.8,300.4V303.4M228.4,300.0V302.0M229.0,299.8V303.1M229.6,296.4V302.6M230.2,297.9V301.9M230.8,298.6V302.0M231.4,297.9V301.6M232.0,297.9V301.6M232.6,298.8V301.8M233.2,299.4V302.4M233.8,299.7V303.2M234.4,296.3V307.4M235.0,298.1V302.6M235.6,298.6V303.7M236.2,299.1V303.1M236.8,300.0V302.5M237.4,301.0V307.0M238.0,301.3V303.2M238.6,297.2V304.6M239.2,300.5V305.5M239.8,299.8V305.4M240.4,300.8V304.2M241.0,297.9V305.8M241.6,301.8V309.8M242.2,299.6V303.8M242.8,301.4V304.3M243.4,298.3V305.3M244.0,298.5V307.2M244.6,303.8V308.7M245.2,306.7V312.1M245.8,307.1V311.0M246.4,309.6V312.2M247.0,310.7V315.3M247.6,313.4V315.7M248.2,313.9V319.4M248.8,316.6V318.9M249.4,313.8V323.6M250.0,319.8V322.8M250.6,320.0V325.7M251.2,323.3V332.8M251.8,325.0V332.6M252.4,324.1V328.9M253.0,324.3V330.4M253.6,323.9V328.1M254.2,318.3V326.1M254.8,318.3V326.3M255.4,321.6V325.6M256.0,321.3V325.8M256.6,320.1V326.1M257.2,320.6V325.2M257.8,321.8V325.1M258.4,321.4V324.0M259.0,320.7V324.3M259.6,322.4V324.6M260.2,318.8V324.2M260.8,316.8V321.4M261.4,313.5V319.6M262.0,315.4V317.9M262.6,315.4V323.1M263.2,312.1V316.8M263.8,311.7V314.9M264.4,308.1V314.7M265.0,307.3V310.0M265.6,306.4V310.6M266.2,301.9V310.5M266.8,299.4V312.3M267.4,304.2V307.6M268.0,304.2V308.1M268.6,305.5V308.6M269.2,301.8V313.6M269.8,307.0V310.1M270.4,306.8V311.6M271.0,309.8V315.2M271.6,308.7V313.1M272.2,311.2V314.6M272.8,312.2V314.2M273.4,312.2V315.9M274.0,310.5V316.1M274.6,312.5V316.7M275.2,311.9V314.8M275.8,308.9V315.0M276.4,313.4V314.8M277.0,310.4V315.8M277.6,313.0V318.8M278.2,314.3V322.3M278.8,315.1V319.3M279.4,317.7V319.4M280.0,316.6V320.7M280.6,318.2V323.8M281.2,320.3V324.0M281.8,318.3V326.0M282.4,314.9V320.1M283.0,317.2V322.1M283.6,317.8V326.7M284.2,317.2V322.5M284.8,315.6V318.9M285.4,315.0V322.7M286.0,314.2V317.5M286.6,313.3V319.8M287.2,311.9V315.2M287.8,312.7V315.5M288.4,308.0V314.6M289.0,310.7V314.2M289.6,310.7V313.6M290.2,310.2V313.3M290.8,310.4V316.8M291.4,313.8V317.2M292.0,316.0V319.3M292.6,317.1V326.6M293.2,320.9V323.7M293.8,321.1V326.0M294.4,322.8V325.5M295.0,323.8V333.1M295.6,326.2V328.3M296.2,325.1V332.3M296.8,322.0V333.3M297.4,327.5V331.6M298.0,327.9V335.4M298.6,325.2V332.0M299.2,326.5V333.5M299.8,331.8V334.2M300.4,332.7V335.9M301.0,334.1V338.1M301.6,334.8V338.8M302.2,334.8V339.8M302.8,334.9V337.0M303.4,333.1V337.4M304.0,329.0V339.8M304.6,328.3V330.9M305.2,328.7V330.7M305.8,324.7V331.2M306.4,321.2V326.5M307.0,322.3V324.7M307.6,321.0V323.9M308.2,321.6V324.8M308.8,323.6V333.8M309.4,326.3V329.1M310.0,326.0V328.9M310.6,325.5V328.7M311.2,324.0V327.2M311.8,318.2V326.7M312.4,320.4V323.1M313.0,321.2V324.6M313.6,320.9V325.3M314.2,320.8V324.3M314.8,318.3V325.1M315.4,321.6V328.2M316.0,322.8V326.9M316.6,323.5V326.8M317.2,319.7V330.0M317.8,326.7V330.1M318.4,327.0V331.5M319.0,328.2V333.8M319.6,326.8V335.5M320.2,331.7V335.3M320.8,330.3V334.3M321.4,329.1V332.0M322.0,325.3V332.4M322.6,327.7V333.7M323.2,328.8V334.8M323.8,332.4V341.1M324.4,332.2V337.1M325.0,327.3V335.0M325.6,324.5V333.6M326.2,326.3V330.3M326.8,326.3V333.3M327.4,325.5V327.8M328.0,324.4V331.0M328.6,323.6V327.5M329.2,323.7V327.6M329.8,324.7V327.7M330.4,325.1V327.3M331.0,324.8V327.4M331.6,322.6V327.8M332.2,323.2V328.9M332.8,324.9V328.5M333.4,323.7V334.7M334.0,322.5V328.2M334.6,326.1V329.9M335.2,322.6V332.7M335.8,328.2V333.7M336.4,331.6V335.8M337.0,331.9V335.8M337.6,330.6V333.4M338.2,327.7V333.0M338.8,326.6V329.8M339.4,318.3V328.4M340.0,307.3V320.5" stroke="#19f019" stroke-width="1.1" fill="none"/>
<path d="M370.4,315.0V326.4M395.9,301.6V279.4M443.4,233.1V247.5M459.0,217.2V196.0M492.4,177.8V188.2M510.8,146.0V110.8M548.2,121.3V146.6M579.5,68.3V25.0M581.9,80.1V133.6M594.1,95.6V143.5M645.8,81.3V40.4M699.0,139.9V125.4M707.6,145.0V161.7M714.5,134.5V121.8M789.1,165.6V183.2M803.3,171.0V148.3M804.1,170.8V194.9M845.7,150.3V163.2" stroke="#19f019" stroke-width="1.15" fill="none"/>
<path d="M354.3,317.0 L354.4,302.0 L356.3,298.9 L359.0,295.5 L360.3,306.2 L363.0,310.3 L365.0,319.7 L367.7,302.2 L369.7,314.3 L372.4,317.0 L375.1,304.9 L377.1,313.0 L379.1,318.3 L383.2,300.9 L385.2,306.2 L390.5,313.6 L393.9,308.9 L397.2,296.8 L400.0,302.0 L403.0,300.0 L407.0,298.0 L410.0,294.2 L412.0,283.4 L413.4,291.5 L417.4,287.4 L419.4,291.5 L422.8,283.4 L424.8,280.8 L426.0,265.6 L427.6,271.7 L429.8,253.5 L431.3,256.6 L433.6,227.8 L436.6,208.2 L438.9,215.7 L441.2,227.8 L445.0,236.9 L448.0,228.0 L452.0,220.0 L455.5,209.7 L457.0,217.2 L460.0,217.2 L462.4,196.0 L462.5,184.9 L464.2,191.5 L466.7,183.2 L470.8,201.5 L475.0,176.6 L480.0,166.6 L484.1,174.9 L488.3,183.2 L490.8,166.6 L495.8,201.5 L499.1,181.5 L502.4,173.2 L504.9,139.9 L507.4,143.3 L509.1,164.9 L512.4,128.3 L515.8,125.0 L518.2,148.3 L519.9,136.6 L523.0,128.0 L527.0,118.0 L529.9,106.7 L530.7,100.0 L533.2,103.3 L534.9,125.0 L538.2,113.3 L540.7,120.0 L543.2,105.0 L546.5,116.6 L550.7,128.3 L551.5,139.9 L555.7,121.6 L559.9,140.5 L564.1,118.5 L568.6,84.0 L572.2,69.5 L575.0,60.4 L577.7,65.8 L580.4,69.5 L584.0,94.9 L586.8,102.1 L589.8,117.0 L592.2,104.0 L595.9,87.6 L598.0,82.0 L602.0,84.0 L604.9,94.9 L606.7,87.6 L608.6,96.7 L610.4,63.1 L613.1,74.9 L618.5,82.2 L621.3,67.6 L624.0,67.6 L625.8,87.6 L628.5,105.8 L631.3,89.4 L635.8,82.2 L638.5,71.3 L641.2,78.5 L644.0,84.0 L647.6,78.5 L649.4,67.6 L652.1,84.0 L655.8,58.6 L659.4,74.9 L662.1,91.2 L664.5,103.6 L667.3,116.3 L669.1,132.7 L672.7,139.9 L675.4,132.7 L676.3,167.1 L678.2,156.3 L680.9,176.2 L682.7,159.9 L684.5,136.3 L688.0,142.0 L692.0,146.0 L696.0,140.0 L699.9,139.9 L703.6,150.8 L709.9,141.7 L713.6,134.5 L718.1,134.5 L722.6,127.2 L726.3,112.7 L729.9,129.0 L732.6,125.4 L736.3,143.5 L741.7,123.6 L743.5,130.8 L746.2,119.9 L749.0,130.8 L752.6,139.9 L756.2,152.6 L759.9,167.1 L762.6,178.0 L764.2,181.6 L768.3,188.2 L772.5,176.6 L775.8,161.6 L777.5,140.0 L780.8,141.6 L783.3,151.6 L786.6,166.6 L790.8,164.9 L795.0,166.6 L799.1,164.9 L801.6,171.6 L806.6,169.9 L809.9,166.6 L810.8,178.2 L812.4,156.6 L815.8,148.3 L819.1,135.8 L820.8,146.6 L823.2,139.9 L826.6,141.6 L830.7,151.6 L834.1,154.9 L838.2,153.3 L841.6,154.9 L844.1,148.3 L848.2,153.3 L850.7,148.3 L854.0,159.9 L857.4,158.3 L859.4,149.9 L861.9,161.6" fill="none" stroke="#19f019" stroke-width="1.9" stroke-linejoin="round" stroke-linecap="round"/>
<path d="M354.3,316.5V319.5M354.9,299.1V319.3M355.5,299.4V302.2M356.1,296.7V302.1M356.7,296.8V300.2M357.3,295.4V300.9M357.9,296.8V299.8M358.5,294.8V299.6M359.1,294.9V296.7M359.7,295.2V303.1M360.3,300.8V306.9M360.9,301.1V308.2M361.5,305.3V308.3M362.1,306.0V314.3M362.7,308.7V312.7M363.3,310.5V316.3M363.9,310.6V316.5M364.5,314.0V317.4M365.1,315.0V320.4M365.7,314.1V320.4M366.3,310.4V316.9M366.9,305.2V313.4M367.5,301.7V307.4M368.1,301.0V305.9M368.7,300.0V309.8M369.3,302.1V313.9M369.9,311.5V316.5M370.5,313.0V315.9M371.1,314.2V321.3M371.7,315.5V317.5M372.3,315.1V317.3M372.9,314.0V318.1M373.5,309.4V316.5M374.1,308.7V312.9M374.7,305.9V310.7M375.3,303.0V308.6M375.9,303.8V313.4M376.5,307.0V310.9M377.1,308.5V314.4M377.7,311.7V320.1M378.3,312.8V317.1M378.9,315.9V317.8M379.5,315.5V318.8M380.1,313.8V317.8M380.7,310.6V315.9M381.3,308.5V314.1M381.9,301.3V314.6M382.5,297.7V307.4M383.1,300.1V305.5M383.7,300.9V309.0M384.3,301.7V305.3M384.9,302.6V305.9M385.5,303.7V307.2M386.1,305.4V309.3M386.7,307.3V310.9M387.3,307.3V311.1M387.9,307.5V310.4M388.5,308.9V313.1M389.1,309.5V312.1M389.7,309.0V314.4M390.3,311.4V315.1M390.9,310.8V317.4M391.5,309.3V314.0M392.1,309.3V313.6M392.7,309.4V313.4M393.3,302.4V310.9M393.9,307.4V310.6M394.5,306.1V315.5M395.1,298.6V313.8M395.7,294.9V304.4M396.3,300.0V301.7M396.9,297.4V301.4M397.5,295.4V299.8M398.1,296.6V301.7M398.7,296.4V305.2M399.3,294.3V302.4M399.9,299.5V303.3M400.5,300.6V309.6M401.1,300.2V303.9M401.7,300.5V302.8M402.3,298.7V303.1M402.9,299.0V301.0M403.5,297.7V301.2M404.1,299.2V301.5M404.7,293.9V301.5M405.3,296.5V301.5M405.9,296.9V299.8M406.5,297.9V299.7M407.1,295.8V300.8M407.7,295.7V297.9M408.3,295.9V298.3M408.9,294.0V303.0M409.5,293.9V297.0M410.1,291.8V297.5M410.7,289.7V293.9M411.3,286.3V295.2M411.9,282.4V288.5M412.5,277.1V287.9M413.1,284.3V289.6M413.7,287.3V298.9M414.3,291.1V293.0M414.9,284.6V293.6M415.5,283.2V291.7M416.1,288.3V294.2M416.7,286.8V290.4M417.3,285.1V288.0M417.9,284.7V287.9M418.5,281.2V291.9M419.1,289.6V292.2M419.7,285.9V292.1M420.3,286.6V295.0M420.9,287.4V289.6M421.5,281.8V290.7M422.1,283.1V288.5M422.7,281.4V289.2M423.3,282.7V285.4M423.9,277.0V284.8M424.5,279.9V282.4M425.1,276.5V282.0M425.7,267.9V277.8M426.3,265.3V269.9M426.9,265.3V269.9M427.5,268.7V273.6M428.1,267.4V272.5M428.7,262.8V269.3M429.3,251.9V265.0M429.9,253.1V258.2M430.5,252.3V260.5M431.1,253.3V258.7M431.7,248.4V261.1M432.3,244.4V250.9M432.9,233.9V246.3M433.5,223.8V236.7M434.1,223.6V232.7M434.7,220.9V225.8M435.3,215.8V222.7M435.9,211.8V219.4M436.5,207.2V214.0M437.1,202.7V212.7M437.7,210.1V214.1M438.3,212.4V217.4M438.9,212.2V218.8M439.5,215.3V220.5M440.1,219.0V223.8M440.7,221.3V225.6M441.3,223.1V228.2M441.9,226.6V233.1M442.5,228.6V231.0M443.1,228.6V232.9M443.7,230.4V235.7M444.3,233.1V236.5M444.9,231.3V238.0M445.5,233.4V237.9M446.1,226.4V235.4M446.7,229.6V237.0M447.3,229.1V232.1M447.9,227.4V233.1M448.5,226.1V230.4M449.1,224.6V233.0M449.7,223.6V228.2M450.3,222.5V226.2M450.9,220.6V225.1M451.5,219.7V223.7M452.1,214.8V221.6M452.7,215.0V220.5M453.3,216.0V220.7M453.9,213.4V219.2M454.5,212.8V215.8M455.1,209.1V215.0M455.7,209.8V211.8M456.3,209.0V215.8M456.9,212.0V218.0M457.5,215.3V218.9M458.1,214.4V217.7M458.7,215.0V219.0M459.3,216.5V219.0M459.9,211.5V218.6M460.5,210.8V217.3M461.1,206.3V213.0M461.7,200.1V209.0M462.3,196.0V204.6M462.9,184.3V198.3M463.5,185.0V189.1M464.1,181.7V191.6M464.7,183.2V191.7M465.3,188.0V196.0M465.9,185.9V190.9M466.5,182.3V188.0M467.1,182.6V185.5M467.7,183.1V188.5M468.3,185.8V194.2M468.9,183.5V193.3M469.5,191.9V200.2M470.1,191.3V199.4M470.7,196.8V204.9M471.3,198.1V201.9M471.9,189.7V200.3M472.5,191.2V196.0M473.1,185.3V193.2M473.7,182.1V188.1M474.3,179.2V184.3M474.9,175.3V180.9M475.5,174.7V177.3M476.1,171.8V176.5M476.7,168.6V180.1M477.3,171.5V175.0M477.9,168.4V173.5M478.5,166.7V173.8M479.1,166.7V172.5M479.7,166.7V169.3M480.3,165.4V174.0M480.9,165.6V169.8M481.5,167.5V169.9M482.1,166.8V172.6M482.7,165.0V173.7M483.3,171.3V176.0M483.9,173.8V176.0M484.5,169.2V178.5M485.1,174.9V178.7M485.7,175.6V178.4M486.3,176.7V180.2M486.9,177.5V180.8M487.5,178.0V181.8M488.1,179.8V185.3M488.7,179.7V188.3M489.3,175.4V181.4M489.9,172.0V176.8M490.5,162.0V173.7M491.1,166.0V173.8M491.7,161.5V174.0M492.3,170.9V178.8M492.9,176.9V181.8M493.5,178.9V186.3M494.1,182.9V192.0M494.7,189.5V195.7M495.3,193.9V199.5M495.9,197.5V203.6M496.5,196.5V207.1M497.1,189.4V199.1M497.7,187.6V193.2M498.3,186.1V190.0M498.9,181.5V188.3M499.5,180.9V183.4M500.1,177.8V182.2M500.7,176.8V180.5M501.3,174.7V179.4M501.9,172.6V178.1M502.5,167.7V175.6M503.1,163.1V172.7M503.7,154.4V167.7M504.3,147.7V156.3M504.9,137.5V149.8M505.5,137.5V140.6M506.1,138.9V141.0M506.7,133.4V144.0M507.3,140.4V143.5M507.9,140.5V153.4M508.5,149.3V158.3M509.1,155.8V167.2M509.7,156.6V167.2M510.3,149.6V163.2M510.9,139.7V156.6M511.5,138.5V147.4M512.1,129.6V142.9M512.7,125.3V131.5M513.3,125.9V128.7M513.9,122.5V133.5M514.5,125.7V127.9M515.1,120.2V128.5M515.7,124.8V126.8M516.3,124.8V131.5M516.9,129.6V140.7M517.5,135.1V144.7M518.1,140.2V148.7M518.7,143.8V153.6M519.3,139.8V146.6M519.9,135.3V143.1M520.5,134.5V137.8M521.1,132.7V139.9M521.7,129.2V134.8M522.3,123.2V131.8M522.9,126.8V133.2M523.5,124.7V129.4M524.1,124.9V127.0M524.7,124.1V128.0M525.3,119.9V126.9M525.9,118.7V121.9M526.5,118.2V120.8M527.1,115.2V125.7M527.7,115.3V117.5M528.3,112.6V118.1M528.9,109.9V115.1M529.5,105.9V111.9M530.1,103.7V113.1M530.7,98.3V105.6M531.3,94.9V105.9M531.9,99.1V102.7M532.5,100.4V104.2M533.1,101.1V104.8M533.7,103.0V112.8M534.3,108.1V118.9M534.9,113.2V128.6M535.5,122.3V128.7M536.1,114.9V123.8M536.7,118.8V122.8M537.3,110.9V126.0M537.9,112.4V117.0M538.5,112.3V116.7M539.1,113.9V116.1M539.7,114.1V119.6M540.3,116.0V119.7M540.9,117.1V120.7M541.5,112.8V121.0M542.1,111.9V116.0M542.7,108.3V114.4M543.3,98.2V115.5M543.9,100.1V107.8M544.5,101.8V112.0M545.1,109.6V113.4M545.7,111.7V114.6M546.3,111.5V115.5M546.9,114.1V123.0M547.5,116.4V120.4M548.1,117.9V123.0M548.7,121.0V123.3M549.3,121.0V125.5M549.9,122.5V128.1M550.5,125.3V128.5M551.1,126.4V138.6M551.7,132.9V141.6M552.3,134.9V141.9M552.9,131.1V136.5M553.5,128.8V133.0M554.1,127.3V132.6M554.7,125.6V130.1M555.3,122.2V127.6M555.9,120.4V124.5M556.5,120.5V132.2M557.1,124.6V129.2M557.7,126.3V130.8M558.3,128.0V135.0M558.9,133.7V140.9M559.5,132.3V140.7M560.1,138.4V141.2M560.7,133.9V141.0M561.3,129.1V136.4M561.9,128.0V134.3M562.5,124.5V129.4M563.1,121.8V127.8M563.7,118.2V123.9M564.3,115.3V121.0M564.9,110.8V117.5M565.5,101.3V113.5M566.1,102.0V113.2M566.7,97.3V104.9M567.3,93.9V99.6M567.9,83.9V96.1M568.5,83.9V95.4M569.1,80.2V91.5M569.7,79.0V81.4M570.3,75.5V85.0M570.9,74.3V79.3M571.5,70.9V76.5M572.1,69.1V72.7M572.7,64.1V70.5M573.3,64.6V70.2M573.9,58.2V67.1M574.5,60.5V64.1M575.1,58.5V63.4M575.7,55.4V64.7M576.3,60.0V63.6M576.9,60.5V67.0M577.5,64.5V71.9M578.1,64.9V66.5M578.7,64.1V67.8M579.3,61.4V68.5M579.9,65.7V74.2M580.5,66.4V70.4M581.1,69.2V75.2M581.7,73.5V80.0M582.3,72.9V85.1M582.9,82.2V89.3M583.5,86.6V92.0M584.1,87.2V96.1M584.7,90.5V99.5M585.3,92.7V99.2M585.9,96.3V99.8M586.5,97.8V100.8M587.1,99.0V108.7M587.7,102.5V106.5M588.3,104.8V110.4M588.9,102.4V118.0M589.5,112.9V116.8M590.1,114.4V116.4M590.7,110.2V117.1M591.3,105.7V112.3M591.9,102.4V112.4M592.5,97.8V107.9M593.1,95.8V104.2M593.7,98.1V101.6M594.3,92.6V105.1M594.9,90.7V94.9M595.5,86.5V92.8M596.1,84.7V91.8M596.7,83.9V88.4M597.3,81.6V91.7M597.9,81.1V84.9M598.5,79.6V83.7M599.1,79.6V84.8M599.7,81.8V84.6M600.3,83.0V86.3M600.9,83.6V85.2M601.5,82.0V85.9M602.1,82.1V86.6M602.7,84.5V87.8M603.3,81.0V93.1M603.9,88.1V93.4M604.5,91.0V94.3M605.1,91.7V94.4M605.7,87.0V94.4M606.3,86.7V93.5M606.9,86.8V89.9M607.5,87.0V92.2M608.1,90.9V95.1M608.7,89.6V96.7M609.3,82.6V97.5M609.9,69.9V84.8M610.5,62.6V72.3M611.1,62.8V73.2M611.7,66.0V70.4M612.3,67.7V77.9M612.9,71.3V79.8M613.5,73.7V77.0M614.1,75.0V78.2M614.7,75.3V79.4M615.3,76.5V78.9M615.9,76.6V79.5M616.5,74.5V81.1M617.1,78.3V82.4M617.7,76.4V82.7M618.3,78.4V82.5M618.9,78.3V83.0M619.5,74.5V81.1M620.1,73.7V77.0M620.7,68.8V80.3M621.3,66.8V72.0M621.9,65.1V69.3M622.5,65.7V69.4M623.1,66.5V70.0M623.7,67.0V69.3M624.3,66.6V71.3M624.9,65.9V79.7M625.5,77.3V86.6M626.1,83.6V94.9M626.7,87.8V96.1M627.3,88.5V100.3M627.9,97.7V102.7M628.5,96.9V106.0M629.1,97.2V106.6M629.7,96.0V107.4M630.3,93.8V100.7M630.9,91.1V96.4M631.5,89.1V93.8M632.1,85.2V90.4M632.7,84.6V88.3M633.3,84.6V87.1M633.9,84.2V90.9M634.5,82.1V87.5M635.1,82.1V84.3M635.7,81.7V84.1M636.3,78.5V84.3M636.9,76.6V81.1M637.5,73.3V79.0M638.1,72.4V75.1M638.7,72.3V73.8M639.3,69.2V80.4M639.9,72.7V76.7M640.5,74.3V78.2M641.1,76.6V78.1M641.7,75.5V81.8M642.3,76.3V82.2M642.9,81.0V83.2M643.5,76.6V83.0M644.1,80.6V86.3M644.7,83.0V88.3M645.3,80.6V85.5M645.9,78.4V82.5M646.5,78.4V81.5M647.1,78.5V85.3M647.7,78.4V80.3M648.3,67.7V79.8M648.9,68.8V75.5M649.5,66.9V70.7M650.1,62.8V72.4M650.7,69.3V80.1M651.3,72.8V80.7M651.9,79.0V85.1M652.5,79.5V84.9M653.1,74.2V80.6M653.7,72.2V77.2M654.3,65.9V78.7M654.9,64.1V68.4M655.5,60.7V67.1M656.1,58.0V62.1M656.7,57.4V63.8M657.3,61.2V68.2M657.9,66.0V70.2M658.5,68.0V73.7M659.1,71.0V77.4M659.7,71.4V79.9M660.3,76.5V82.6M660.9,80.9V84.4M661.5,81.0V90.1M662.1,86.7V91.0M662.7,88.2V95.1M663.3,92.6V98.6M663.9,96.9V102.6M664.5,100.9V103.7M665.1,100.8V107.6M665.7,105.3V108.9M666.3,106.5V112.5M666.9,107.4V119.0M667.5,114.1V118.3M668.1,112.5V123.7M668.7,116.6V131.1M669.3,129.0V135.7M669.9,129.9V136.0M670.5,133.1V136.5M671.1,133.9V137.6M671.7,129.9V144.1M672.3,136.6V139.4M672.9,137.5V139.6M673.5,136.1V140.6M674.1,134.3V138.2M674.7,134.8V137.0M675.3,130.5V136.3M675.9,131.0V151.8M676.5,150.0V166.4M677.1,162.5V166.4M677.7,157.6V170.9M678.3,156.3V160.1M678.9,156.2V162.1M679.5,159.2V165.6M680.1,164.0V171.8M680.7,164.9V174.6M681.3,171.9V174.6M681.9,164.5V174.5M682.5,159.6V166.9M683.1,151.6V164.8M683.7,146.2V157.6M684.3,135.7V148.3M684.9,136.4V140.1M685.5,137.4V140.8M686.1,137.9V141.3M686.7,137.5V145.1M687.3,137.4V144.3M687.9,134.5V141.5M688.5,140.2V144.4M689.1,141.9V145.3M689.7,142.1V152.0M690.3,142.7V145.9M690.9,142.1V147.2M691.5,144.7V146.6M692.1,144.3V147.8M692.7,142.0V147.4M693.3,142.5V144.8M693.9,140.4V144.7M694.5,141.4V144.3M695.1,141.0V144.9M695.7,138.4V142.6M696.3,139.4V142.6M696.9,140.0V141.9M697.5,138.0V145.8M698.1,137.4V142.2M698.7,137.8V141.7M699.3,137.2V141.1M699.9,138.1V142.1M700.5,139.4V142.8M701.1,135.9V145.3M701.7,143.9V145.1M702.3,143.7V146.5M702.9,144.9V152.4M703.5,146.4V151.7M704.1,144.0V151.3M704.7,146.9V150.4M705.3,143.1V149.8M705.9,145.7V148.3M706.5,144.2V147.9M707.1,144.7V147.2M707.7,138.9V147.9M708.3,142.2V149.6M708.9,141.5V144.7M709.5,141.6V144.3M710.1,139.5V145.0M710.7,138.7V142.4M711.3,132.6V147.3M711.9,132.8V139.6M712.5,134.8V142.4M713.1,134.0V137.1M713.7,132.8V136.7M714.3,132.2V139.8M714.9,133.5V135.4M715.5,132.3V140.9M716.1,132.3V141.3M716.7,130.0V139.4M717.3,131.6V135.3M717.9,133.3V135.3M718.5,131.9V135.8M719.1,130.9V134.1M719.7,131.0V133.5M720.3,128.2V133.5M720.9,127.9V130.6M721.5,126.5V130.8M722.1,121.7V130.2M722.7,126.1V129.9M723.3,122.8V129.0M723.9,120.2V125.6M724.5,119.3V121.9M725.1,117.3V122.4M725.7,110.6V120.5M726.3,112.6V117.2M726.9,111.8V115.9M727.5,112.7V118.1M728.1,115.3V123.4M728.7,116.2V123.8M729.3,122.3V126.6M729.9,123.5V130.6M730.5,127.6V131.1M731.1,127.1V130.0M731.7,125.5V129.5M732.3,124.0V127.7M732.9,123.2V126.4M733.5,124.7V131.0M734.1,129.4V134.4M734.7,131.8V136.8M735.3,133.1V140.0M735.9,138.4V143.5M736.5,139.9V144.1M737.1,137.9V143.0M737.7,132.4V140.5M738.3,135.4V139.2M738.9,131.5V138.9M739.5,130.1V134.0M740.1,127.8V132.0M740.7,125.7V129.6M741.3,125.4V127.9M741.9,123.5V127.1M742.5,120.9V126.7M743.1,124.8V130.8M743.7,128.0V130.5M744.3,126.0V130.5M744.9,123.2V128.3M745.5,121.6V125.8M746.1,116.9V128.5M746.7,119.2V124.1M747.3,122.1V125.4M747.9,123.0V126.7M748.5,124.1V131.1M749.1,125.2V133.3M749.7,130.2V134.8M750.3,127.2V135.0M750.9,133.3V135.4M751.5,133.3V139.5M752.1,137.3V139.6M752.7,137.6V140.6M753.3,138.7V143.4M753.9,137.1V148.6M754.5,144.1V146.9M755.1,138.9V151.8M755.7,148.4V156.7M756.3,146.4V157.6M756.9,152.3V156.6M757.5,154.5V159.9M758.1,157.0V160.7M758.7,158.4V167.8M759.3,163.2V170.2M759.9,164.1V169.0M760.5,166.9V170.9M761.1,168.4V172.9M761.7,170.5V179.4M762.3,171.5V177.8M762.9,174.7V181.8M763.5,178.8V181.7M764.1,177.8V183.7M764.7,180.4V183.0M765.3,179.9V183.4M765.9,181.2V184.7M766.5,181.5V188.7M767.1,183.4V186.3M767.7,183.8V188.5M768.3,186.0V188.8M768.9,185.5V188.9M769.5,184.5V189.5M770.1,178.1V192.6M770.7,180.1V183.8M771.3,177.6V187.2M771.9,178.7V180.5M772.5,176.3V186.0M773.1,172.0V178.4M773.7,171.2V174.4M774.3,165.9V173.7M774.9,164.8V174.5M775.5,162.4V167.6M776.1,156.8V165.6M776.7,145.6V159.4M777.3,140.9V151.6M777.9,137.5V142.9M778.5,137.9V141.3M779.1,135.9V141.0M779.7,138.4V142.7M780.3,140.0V143.4M780.9,140.8V144.2M781.5,141.8V144.5M782.1,141.5V147.2M782.7,142.1V152.1M783.3,146.2V154.2M783.9,151.3V155.1M784.5,153.9V159.8M785.1,157.0V161.7M785.7,153.6V163.2M786.3,160.3V165.7M786.9,162.9V169.3M787.5,165.4V172.2M788.1,163.7V168.0M788.7,163.7V169.2M789.3,164.5V167.5M789.9,163.9V166.5M790.5,163.7V167.2M791.1,163.2V169.4M791.7,164.2V166.4M792.3,159.9V166.4M792.9,164.1V170.4M793.5,165.5V171.5M794.1,165.1V168.5M794.7,164.1V172.0M795.3,164.3V171.0M795.9,164.1V168.5M796.5,162.0V168.7M797.1,163.9V167.7M797.7,163.2V168.3M798.3,159.3V172.0M798.9,159.7V168.3M799.5,163.9V166.1M800.1,163.4V168.2M800.7,161.5V171.0M801.3,169.8V176.2M801.9,170.7V172.5M802.5,171.0V174.5M803.1,169.5V174.1M803.7,168.8V172.5M804.3,168.7V171.5M804.9,169.4V172.1M805.5,168.1V172.0M806.1,167.6V170.9M806.7,167.9V171.2M807.3,167.3V170.5M807.9,166.9V170.1M808.5,167.0V170.7M809.1,165.2V169.0M809.7,164.3V168.9M810.3,165.7V172.2M810.9,169.5V177.7M811.5,168.7V177.3M812.1,159.0V170.7M812.7,153.7V161.5M813.3,154.1V156.1M813.9,148.0V156.0M814.5,149.1V154.2M815.1,149.3V150.9M815.7,147.2V152.1M816.3,142.2V148.9M816.9,143.2V147.3M817.5,135.2V146.2M818.1,139.7V147.7M818.7,137.3V142.2M819.3,134.8V139.0M819.9,134.6V145.8M820.5,137.1V147.3M821.1,143.7V146.0M821.7,143.2V145.9M822.3,140.3V145.3M822.9,138.2V142.5M823.5,139.0V140.8M824.1,137.9V141.5M824.7,138.3V142.7M825.3,139.9V143.0M825.9,139.8V142.6M826.5,139.5V141.7M827.1,139.8V144.5M827.7,141.9V144.8M828.3,142.0V145.5M828.9,144.0V151.6M829.5,146.1V150.5M830.1,148.1V151.0M830.7,148.2V153.1M831.3,149.7V151.8M831.9,150.2V155.1M832.5,152.9V155.2M833.1,152.2V156.2M833.7,151.3V155.4M834.3,153.0V155.0M834.9,152.0V157.6M835.5,151.9V157.4M836.1,151.2V155.0M836.7,151.4V154.1M837.3,151.0V153.8M837.9,151.2V153.9M838.5,151.7V160.6M839.1,152.7V155.7M839.7,153.0V160.9M840.3,153.0V156.3M840.9,152.5V154.8M841.5,153.1V156.1M842.1,150.6V155.7M842.7,150.8V153.0M843.3,149.8V153.7M843.9,144.0V152.2M844.5,147.0V153.7M845.1,147.0V150.9M845.7,148.1V150.8M846.3,148.1V151.6M846.9,148.8V154.0M847.5,147.2V154.0M848.1,146.0V154.4M848.7,150.2V156.5M849.3,149.5V152.2M849.9,146.6V155.8M850.5,142.9V151.3M851.1,143.1V151.9M851.7,149.8V153.2M852.3,150.6V154.8M852.9,151.9V157.5M853.5,155.6V160.2M854.1,157.1V160.5M854.7,157.6V160.0M855.3,153.6V161.1M855.9,158.3V160.4M856.5,158.4V165.4M857.1,155.4V160.1M857.7,155.1V162.3M858.3,152.1V157.2M858.9,152.4V155.4M859.5,146.6V154.0M860.1,150.0V157.7M860.7,150.5V157.5M861.3,155.2V159.7" stroke="#19f019" stroke-width="1.1" fill="none"/>
</g>
<g opacity="0.9">
<ellipse cx="402.6" cy="303.8" rx="7.3" ry="11.4" fill="#a69c9a"/>
<ellipse cx="402.6" cy="303.8" rx="5.6" ry="8.8" fill="#908a88"/>
<polygon points="399.0,303.8 401.0,299.4 403.0,303.8 401.0,308.2" fill="#d8203c" stroke="#ffffff" stroke-width="0.9" stroke-linejoin="round"/>
<polygon points="403.0,303.8 405.8,298.4 405.8,308.8" fill="#eeb040" stroke="#ffffff" stroke-width="0.9" stroke-linejoin="round"/>
<circle cx="401.4" cy="302.4" r="0.8" fill="#2838b0"/>
<ellipse cx="402.6" cy="313.4" rx="2.2" ry="1.6" fill="#d84040"/>
</g>
<g opacity="0.9">
<ellipse cx="451.3" cy="224.8" rx="7.3" ry="11.4" fill="#a69c9a"/>
<ellipse cx="451.3" cy="224.8" rx="5.6" ry="8.8" fill="#908a88"/>
<polygon points="447.3,224.8 451.9,219.2 450.7,224.8 451.9,230.4" fill="#ffffff" stroke="#ffffff" stroke-width="1.2" stroke-linejoin="round"/>
<polygon points="452.1,224.8 454.7,220.2 454.7,229.4" fill="#f0b860"/>
<circle cx="449.9" cy="224.8" r="0.9" fill="#3050c0"/>
<ellipse cx="451.9" cy="215.2" rx="2.0" ry="1.7" fill="#d83030"/>
</g>
<g opacity="0.9">
<ellipse cx="524.9" cy="125.8" rx="7.3" ry="11.4" fill="#a69c9a"/>
<ellipse cx="524.9" cy="125.8" rx="5.6" ry="8.8" fill="#908a88"/>
<polygon points="520.9,125.8 525.5,120.2 524.3,125.8 525.5,131.4" fill="#ffffff" stroke="#ffffff" stroke-width="1.2" stroke-linejoin="round"/>
<polygon points="525.7,125.8 528.3,121.2 528.3,130.4" fill="#f0b860"/>
<circle cx="523.5" cy="125.8" r="0.9" fill="#3050c0"/>
<ellipse cx="525.5" cy="116.2" rx="2.0" ry="1.7" fill="#d83030"/>
</g>
<g opacity="0.9">
<ellipse cx="600.0" cy="79.0" rx="7.3" ry="11.4" fill="#a69c9a"/>
<ellipse cx="600.0" cy="79.0" rx="5.6" ry="8.8" fill="#908a88"/>
<polygon points="596.0,79.0 600.6,73.4 599.4,79.0 600.6,84.6" fill="#ffffff" stroke="#ffffff" stroke-width="1.2" stroke-linejoin="round"/>
<polygon points="600.8,79.0 603.4,74.4 603.4,83.6" fill="#f0b860"/>
<circle cx="598.6" cy="79.0" r="0.9" fill="#3050c0"/>
<ellipse cx="600.6" cy="69.4" rx="2.0" ry="1.7" fill="#d83030"/>
</g>
<g opacity="0.9">
<ellipse cx="692.0" cy="145.6" rx="7.3" ry="11.4" fill="#a69c9a"/>
<ellipse cx="692.0" cy="145.6" rx="5.6" ry="8.8" fill="#908a88"/>
<polygon points="688.4,145.6 690.4,141.2 692.4,145.6 690.4,150.0" fill="#d8203c" stroke="#ffffff" stroke-width="0.9" stroke-linejoin="round"/>
<polygon points="692.4,145.6 695.2,140.2 695.2,150.6" fill="#eeb040" stroke="#ffffff" stroke-width="0.9" stroke-linejoin="round"/>
<circle cx="690.8" cy="144.2" r="0.8" fill="#2838b0"/>
<ellipse cx="692.0" cy="155.2" rx="2.2" ry="1.6" fill="#d84040"/>
</g>
<rect x="211.50" y="63.60" width="143.00" height="245.70" fill="#000000" stroke="#8c8c8c" stroke-width="1.3"/>
<text x="217.50" y="80.23" textLength="43.50" lengthAdjust="spacingAndGlyphs" font-size="14" fill="#d61616" stroke="#d61616" stroke-width="0.22">EA BASAN</text>
<text transform="translate(217.50,103.73) scale(0.6,1)" font-size="14" fill="#deda3c" stroke="#deda3c" stroke-width="0.22">Account information</text>
<text transform="translate(217.50,125.23) scale(0.6,1)" font-size="14" fill="#d61616" stroke="#d61616" stroke-width="0.22">Spread:</text>
<text transform="translate(309.00,125.23) scale(0.6,1)" font-size="14" fill="#deda3c" stroke="#deda3c" stroke-width="0.22">10</text>
<text transform="translate(217.50,141.43) scale(0.6,1)" font-size="14" fill="#d61616" stroke="#d61616" stroke-width="0.22">Leverage:</text>
<text transform="translate(309.00,141.43) scale(0.6,1)" font-size="14" fill="#deda3c" stroke="#deda3c" stroke-width="0.22">500</text>
<text transform="translate(217.50,157.43) scale(0.6,1)" font-size="14" fill="#d61616" stroke="#d61616" stroke-width="0.22">Balance:</text>
<text transform="translate(309.00,157.43) scale(0.6,1)" font-size="14" fill="#deda3c" stroke="#deda3c" stroke-width="0.22">10028.6</text>
<text transform="translate(217.50,173.43) scale(0.6,1)" font-size="14" fill="#d61616" stroke="#d61616" stroke-width="0.22">Equity:</text>
<text transform="translate(309.00,173.43) scale(0.6,1)" font-size="14" fill="#deda3c" stroke="#deda3c" stroke-width="0.22">10028.6</text>
<text transform="translate(217.50,195.43) scale(0.6,1)" font-size="14" fill="#deda3c" stroke="#deda3c" stroke-width="0.22">Profit on account</text>
<text transform="translate(217.50,216.83) scale(0.6,1)" font-size="14" fill="#d61616" stroke="#d61616" stroke-width="0.22">Max Floating $:</text>
<text transform="translate(309.00,216.83) scale(0.6,1)" font-size="14" fill="#deda3c" stroke="#deda3c" stroke-width="0.22">-17.5</text>
<text transform="translate(217.50,233.03) scale(0.6,1)" font-size="14" fill="#d61616" stroke="#d61616" stroke-width="0.22">Total profit:</text>
<text transform="translate(309.00,233.03) scale(0.6,1)" font-size="14" fill="#deda3c" stroke="#deda3c" stroke-width="0.22">0.00</text>
<text transform="translate(217.50,249.23) scale(0.6,1)" font-size="14" fill="#d61616" stroke="#d61616" stroke-width="0.22">Profit for today:</text>
<text transform="translate(309.00,249.23) scale(0.6,1)" font-size="14" fill="#deda3c" stroke="#deda3c" stroke-width="0.22">0.00</text>
<text transform="translate(217.50,265.43) scale(0.6,1)" font-size="14" fill="#d61616" stroke="#d61616" stroke-width="0.22">Profit for yesterday:</text>
<text transform="translate(309.00,265.43) scale(0.6,1)" font-size="14" fill="#deda3c" stroke="#deda3c" stroke-width="0.22">0.00</text>
<text transform="translate(217.50,281.63) scale(0.6,1)" font-size="14" fill="#d61616" stroke="#d61616" stroke-width="0.22">Profit for week:</text>
<text transform="translate(309.00,281.63) scale(0.6,1)" font-size="14" fill="#deda3c" stroke="#deda3c" stroke-width="0.22">0.00</text>
<text transform="translate(217.50,297.83) scale(0.6,1)" font-size="14" fill="#d61616" stroke="#d61616" stroke-width="0.22">Profit for month:</text>
<text transform="translate(309.00,297.83) scale(0.6,1)" font-size="14" fill="#deda3c" stroke="#deda3c" stroke-width="0.22">0.00</text>
<text x="208.50" y="387.09" textLength="67.10" lengthAdjust="spacingAndGlyphs" font-size="13" fill="#8c8c8c" stroke="#8c8c8c" stroke-width="0.22">EURUSD,H1 (visual)</text>
<line x1="283.30" y1="375.00" x2="283.30" y2="390.00" stroke="#9a9a9a" stroke-width="1"/>
<text x="290.70" y="387.09" textLength="67.40" lengthAdjust="spacingAndGlyphs" font-size="13" fill="#8c8c8c" stroke="#8c8c8c" stroke-width="0.22">XAUUSD,H1 (visual)</text>
<line x1="367.20" y1="375.00" x2="367.20" y2="390.00" stroke="#9a9a9a" stroke-width="1"/>
<text x="374.40" y="387.09" textLength="67.60" lengthAdjust="spacingAndGlyphs" font-size="13" fill="#8c8c8c" stroke="#8c8c8c" stroke-width="0.22">XAUUSD,H1 (visual)</text>
<rect x="450.30" y="371.60" width="83.00" height="20.00" fill="#ffffff" stroke="#333333" stroke-width="1.2"/>
<rect x="451.00" y="370.90" width="81.60" height="2.20" fill="#ffffff"/>
<text x="458.00" y="387.09" textLength="68.00" lengthAdjust="spacingAndGlyphs" font-size="13" fill="#111111" stroke="#111111" stroke-width="0.22">XAUUSD,H1 (visual)</text>
<polygon points="872.6,381.8 875.0,378.4 875.0,385.2" fill="#a8a8a8"/>
<polygon points="887.2,381.8 884.8,378.4 884.8,385.2" fill="#a8a8a8"/>
<rect x="0.00" y="398.80" width="10.00" height="255.00" fill="#f0f0f0"/>
<rect x="0.00" y="412.50" width="9.60" height="241.50" fill="#cbd8ea"/>
<path d="M2.5,401.8 L6.4,406.6 M6.4,401.8 L2.5,406.6" stroke="#111" stroke-width="1.5" fill="none"/>
<text transform="translate(8.0,651.6) rotate(-90) scale(0.86,0.69)" font-size="13" fill="#2c2c38" stroke="#2c2c38" stroke-width="0.45">Tester</text>
<rect x="10.20" y="398.80" width="881.80" height="232.40" fill="#ffffff"/>
<rect x="892.00" y="398.80" width="2.00" height="262.20" fill="#fafafa"/>
<line x1="39.85" y1="403.40" x2="39.85" y2="612.60" stroke="#d6d6d6" stroke-width="1" stroke-dasharray="2.6,2.6"/>
<line x1="66.30" y1="403.40" x2="66.30" y2="612.60" stroke="#d6d6d6" stroke-width="1" stroke-dasharray="2.6,2.6"/>
<line x1="92.75" y1="403.40" x2="92.75" y2="612.60" stroke="#d6d6d6" stroke-width="1" stroke-dasharray="2.6,2.6"/>
<line x1="119.20" y1="403.40" x2="119.20" y2="612.60" stroke="#d6d6d6" stroke-width="1" stroke-dasharray="2.6,2.6"/>
<line x1="145.65" y1="403.40" x2="145.65" y2="612.60" stroke="#d6d6d6" stroke-width="1" stroke-dasharray="2.6,2.6"/>
<line x1="172.10" y1="403.40" x2="172.10" y2="612.60" stroke="#d6d6d6" stroke-width="1" stroke-dasharray="2.6,2.6"/>
<line x1="198.55" y1="403.40" x2="198.55" y2="612.60" stroke="#d6d6d6" stroke-width="1" stroke-dasharray="2.6,2.6"/>
<line x1="225.00" y1="403.40" x2="225.00" y2="612.60" stroke="#d6d6d6" stroke-width="1" stroke-dasharray="2.6,2.6"/>
<line x1="251.45" y1="403.40" x2="251.45" y2="612.60" stroke="#d6d6d6" stroke-width="1" stroke-dasharray="2.6,2.6"/>
<line x1="277.90" y1="403.40" x2="277.90" y2="612.60" stroke="#d6d6d6" stroke-width="1" stroke-dasharray="2.6,2.6"/>
<line x1="304.35" y1="403.40" x2="304.35" y2="612.60" stroke="#d6d6d6" stroke-width="1" stroke-dasharray="2.6,2.6"/>
<line x1="330.80" y1="403.40" x2="330.80" y2="612.60" stroke="#d6d6d6" stroke-width="1" stroke-dasharray="2.6,2.6"/>
<line x1="357.25" y1="403.40" x2="357.25" y2="612.60" stroke="#d6d6d6" stroke-width="1" stroke-dasharray="2.6,2.6"/>
<line x1="383.70" y1="403.40" x2="383.70" y2="612.60" stroke="#d6d6d6" stroke-width="1" stroke-dasharray="2.6,2.6"/>
<line x1="410.15" y1="403.40" x2="410.15" y2="612.60" stroke="#d6d6d6" stroke-width="1" stroke-dasharray="2.6,2.6"/>
<line x1="436.60" y1="403.40" x2="436.60" y2="612.60" stroke="#d6d6d6" stroke-width="1" stroke-dasharray="2.6,2.6"/>
<line x1="463.05" y1="403.40" x2="463.05" y2="612.60" stroke="#d6d6d6" stroke-width="1" stroke-dasharray="2.6,2.6"/>
<line x1="489.50" y1="403.40" x2="489.50" y2="612.60" stroke="#d6d6d6" stroke-width="1" stroke-dasharray="2.6,2.6"/>
<line x1="515.95" y1="403.40" x2="515.95" y2="612.60" stroke="#d6d6d6" stroke-width="1" stroke-dasharray="2.6,2.6"/>
<line x1="542.40" y1="403.40" x2="542.40" y2="612.60" stroke="#d6d6d6" stroke-width="1" stroke-dasharray="2.6,2.6"/>
<line x1="568.85" y1="403.40" x2="568.85" y2="612.60" stroke="#d6d6d6" stroke-width="1" stroke-dasharray="2.6,2.6"/>
<line x1="595.30" y1="403.40" x2="595.30" y2="612.60" stroke="#d6d6d6" stroke-width="1" stroke-dasharray="2.6,2.6"/>
<line x1="621.75" y1="403.40" x2="621.75" y2="612.60" stroke="#d6d6d6" stroke-width="1" stroke-dasharray="2.6,2.6"/>
<line x1="648.20" y1="403.40" x2="648.20" y2="612.60" stroke="#d6d6d6" stroke-width="1" stroke-dasharray="2.6,2.6"/>
<line x1="674.65" y1="403.40" x2="674.65" y2="612.60" stroke="#d6d6d6" stroke-width="1" stroke-dasharray="2.6,2.6"/>
<line x1="701.10" y1="403.40" x2="701.10" y2="612.60" stroke="#d6d6d6" stroke-width="1" stroke-dasharray="2.6,2.6"/>
<line x1="727.55" y1="403.40" x2="727.55" y2="612.60" stroke="#d6d6d6" stroke-width="1" stroke-dasharray="2.6,2.6"/>
<line x1="754.00" y1="403.40" x2="754.00" y2="612.60" stroke="#d6d6d6" stroke-width="1" stroke-dasharray="2.6,2.6"/>
<line x1="780.45" y1="403.40" x2="780.45" y2="612.60" stroke="#d6d6d6" stroke-width="1" stroke-dasharray="2.6,2.6"/>
<line x1="806.90" y1="403.40" x2="806.90" y2="612.60" stroke="#d6d6d6" stroke-width="1" stroke-dasharray="2.6,2.6"/>
<line x1="833.35" y1="403.40" x2="833.35" y2="612.60" stroke="#d6d6d6" stroke-width="1" stroke-dasharray="2.6,2.6"/>
<line x1="13.40" y1="439.00" x2="862.70" y2="439.00" stroke="#d6d6d6" stroke-width="1" stroke-dasharray="2.6,2.6"/>
<line x1="13.40" y1="473.40" x2="862.70" y2="473.40" stroke="#d6d6d6" stroke-width="1" stroke-dasharray="2.6,2.6"/>
<line x1="13.40" y1="507.90" x2="862.70" y2="507.90" stroke="#d6d6d6" stroke-width="1" stroke-dasharray="2.6,2.6"/>
<line x1="13.40" y1="542.30" x2="862.70" y2="542.30" stroke="#d6d6d6" stroke-width="1" stroke-dasharray="2.6,2.6"/>
<line x1="13.40" y1="576.80" x2="862.70" y2="576.80" stroke="#d6d6d6" stroke-width="1" stroke-dasharray="2.6,2.6"/>
<rect x="13.40" y="403.40" width="849.30" height="209.20" fill="none" stroke="#2a2a2a" stroke-width="1.5"/>
<line x1="862.70" y1="439.00" x2="864.90" y2="439.00" stroke="#303030" stroke-width="1"/>
<text transform="translate(865.70,444.02) scale(0.53,1)" font-size="10.5" fill="#202020" stroke="#202020" stroke-width="0.22">10027</text>
<line x1="862.70" y1="473.40" x2="864.90" y2="473.40" stroke="#303030" stroke-width="1"/>
<text transform="translate(865.70,478.42) scale(0.53,1)" font-size="10.5" fill="#202020" stroke="#202020" stroke-width="0.22">10021</text>
<line x1="862.70" y1="507.90" x2="864.90" y2="507.90" stroke="#303030" stroke-width="1"/>
<text transform="translate(865.70,512.92) scale(0.53,1)" font-size="10.5" fill="#202020" stroke="#202020" stroke-width="0.22">10015</text>
<line x1="862.70" y1="542.30" x2="864.90" y2="542.30" stroke="#303030" stroke-width="1"/>
<text transform="translate(865.70,547.32) scale(0.53,1)" font-size="10.5" fill="#202020" stroke="#202020" stroke-width="0.22">10010</text>
<line x1="862.70" y1="576.80" x2="864.90" y2="576.80" stroke="#303030" stroke-width="1"/>
<text transform="translate(865.70,581.82) scale(0.53,1)" font-size="10.5" fill="#202020" stroke="#202020" stroke-width="0.22">10004</text>
<line x1="862.70" y1="611.60" x2="864.90" y2="611.60" stroke="#303030" stroke-width="1"/>
<text transform="translate(865.70,616.62) scale(0.53,1)" font-size="10.5" fill="#202020" stroke="#202020" stroke-width="0.22">9999</text>
<line x1="13.40" y1="612.60" x2="13.40" y2="614.80" stroke="#303030" stroke-width="1"/>
<text transform="translate(13.60,624.62) scale(0.53,1)" font-size="10.5" fill="#202020" stroke="#202020" stroke-width="0.22">0</text>
<line x1="39.85" y1="612.60" x2="39.85" y2="614.80" stroke="#303030" stroke-width="1"/>
<text transform="translate(39.55,624.62) scale(0.53,1)" font-size="10.5" fill="#202020" text-anchor="end" stroke="#202020" stroke-width="0.22">1</text>
<line x1="66.30" y1="612.60" x2="66.30" y2="614.80" stroke="#303030" stroke-width="1"/>
<text transform="translate(66.00,624.62) scale(0.53,1)" font-size="10.5" fill="#202020" text-anchor="end" stroke="#202020" stroke-width="0.22">2</text>
<line x1="92.75" y1="612.60" x2="92.75" y2="614.80" stroke="#303030" stroke-width="1"/>
<text transform="translate(92.45,624.62) scale(0.53,1)" font-size="10.5" fill="#202020" text-anchor="end" stroke="#202020" stroke-width="0.22">3</text>
<line x1="119.20" y1="612.60" x2="119.20" y2="614.80" stroke="#303030" stroke-width="1"/>
<text transform="translate(118.90,624.62) scale(0.53,1)" font-size="10.5" fill="#202020" text-anchor="end" stroke="#202020" stroke-width="0.22">4</text>
<line x1="145.65" y1="612.60" x2="145.65" y2="614.80" stroke="#303030" stroke-width="1"/>
<text transform="translate(145.35,624.62) scale(0.53,1)" font-size="10.5" fill="#202020" text-anchor="end" stroke="#202020" stroke-width="0.22">5</text>
<line x1="172.10" y1="612.60" x2="172.10" y2="614.80" stroke="#303030" stroke-width="1"/>
<text transform="translate(171.80,624.62) scale(0.53,1)" font-size="10.5" fill="#202020" text-anchor="end" stroke="#202020" stroke-width="0.22">6</text>
<line x1="198.55" y1="612.60" x2="198.55" y2="614.80" stroke="#303030" stroke-width="1"/>
<text transform="translate(198.25,624.62) scale(0.53,1)" font-size="10.5" fill="#202020" text-anchor="end" stroke="#202020" stroke-width="0.22">7</text>
<line x1="225.00" y1="612.60" x2="225.00" y2="614.80" stroke="#303030" stroke-width="1"/>
<text transform="translate(224.70,624.62) scale(0.53,1)" font-size="10.5" fill="#202020" text-anchor="end" stroke="#202020" stroke-width="0.22">8</text>
<line x1="251.45" y1="612.60" x2="251.45" y2="614.80" stroke="#303030" stroke-width="1"/>
<text transform="translate(251.15,624.62) scale(0.53,1)" font-size="10.5" fill="#202020" text-anchor="end" stroke="#202020" stroke-width="0.22">9</text>
<line x1="277.90" y1="612.60" x2="277.90" y2="614.80" stroke="#303030" stroke-width="1"/>
<text transform="translate(277.60,624.62) scale(0.53,1)" font-size="10.5" fill="#202020" text-anchor="end" stroke="#202020" stroke-width="0.22">10</text>
<line x1="304.35" y1="612.60" x2="304.35" y2="614.80" stroke="#303030" stroke-width="1"/>
<text transform="translate(304.05,624.62) scale(0.53,1)" font-size="10.5" fill="#202020" text-anchor="end" stroke="#202020" stroke-width="0.22">11</text>
<line x1="330.80" y1="612.60" x2="330.80" y2="614.80" stroke="#303030" stroke-width="1"/>
<text transform="translate(330.50,624.62) scale(0.53,1)" font-size="10.5" fill="#202020" text-anchor="end" stroke="#202020" stroke-width="0.22">12</text>
<line x1="357.25" y1="612.60" x2="357.25" y2="614.80" stroke="#303030" stroke-width="1"/>
<text transform="translate(356.95,624.62) scale(0.53,1)" font-size="10.5" fill="#202020" text-anchor="end" stroke="#202020" stroke-width="0.22">13</text>
<line x1="383.70" y1="612.60" x2="383.70" y2="614.80" stroke="#303030" stroke-width="1"/>
<text transform="translate(383.40,624.62) scale(0.53,1)" font-size="10.5" fill="#202020" text-anchor="end" stroke="#202020" stroke-width="0.22">14</text>
<line x1="410.15" y1="612.60" x2="410.15" y2="614.80" stroke="#303030" stroke-width="1"/>
<text transform="translate(409.85,624.62) scale(0.53,1)" font-size="10.5" fill="#202020" text-anchor="end" stroke="#202020" stroke-width="0.22">15</text>
<line x1="436.60" y1="612.60" x2="436.60" y2="614.80" stroke="#303030" stroke-width="1"/>
<text transform="translate(436.30,624.62) scale(0.53,1)" font-size="10.5" fill="#202020" text-anchor="end" stroke="#202020" stroke-width="0.22">16</text>
<line x1="463.05" y1="612.60" x2="463.05" y2="614.80" stroke="#303030" stroke-width="1"/>
<text transform="translate(462.75,624.62) scale(0.53,1)" font-size="10.5" fill="#202020" text-anchor="end" stroke="#202020" stroke-width="0.22">17</text>
<line x1="489.50" y1="612.60" x2="489.50" y2="614.80" stroke="#303030" stroke-width="1"/>
<text transform="translate(489.20,624.62) scale(0.53,1)" font-size="10.5" fill="#202020" text-anchor="end" stroke="#202020" stroke-width="0.22">18</text>
<line x1="515.95" y1="612.60" x2="515.95" y2="614.80" stroke="#303030" stroke-width="1"/>
<text transform="translate(515.65,624.62) scale(0.53,1)" font-size="10.5" fill="#202020" text-anchor="end" stroke="#202020" stroke-width="0.22">19</text>
<line x1="542.40" y1="612.60" x2="542.40" y2="614.80" stroke="#303030" stroke-width="1"/>
<text transform="translate(542.10,624.62) scale(0.53,1)" font-size="10.5" fill="#202020" text-anchor="end" stroke="#202020" stroke-width="0.22">20</text>
<line x1="568.85" y1="612.60" x2="568.85" y2="614.80" stroke="#303030" stroke-width="1"/>
<text transform="translate(568.55,624.62) scale(0.53,1)" font-size="10.5" fill="#202020" text-anchor="end" stroke="#202020" stroke-width="0.22">21</text>
<line x1="595.30" y1="612.60" x2="595.30" y2="614.80" stroke="#303030" stroke-width="1"/>
<text transform="translate(595.00,624.62) scale(0.53,1)" font-size="10.5" fill="#202020" text-anchor="end" stroke="#202020" stroke-width="0.22">22</text>
<line x1="621.75" y1="612.60" x2="621.75" y2="614.80" stroke="#303030" stroke-width="1"/>
<text transform="translate(621.45,624.62) scale(0.53,1)" font-size="10.5" fill="#202020" text-anchor="end" stroke="#202020" stroke-width="0.22">23</text>
<line x1="648.20" y1="612.60" x2="648.20" y2="614.80" stroke="#303030" stroke-width="1"/>
<text transform="translate(647.90,624.62) scale(0.53,1)" font-size="10.5" fill="#202020" text-anchor="end" stroke="#202020" stroke-width="0.22">24</text>
<line x1="674.65" y1="612.60" x2="674.65" y2="614.80" stroke="#303030" stroke-width="1"/>
<text transform="translate(674.35,624.62) scale(0.53,1)" font-size="10.5" fill="#202020" text-anchor="end" stroke="#202020" stroke-width="0.22">25</text>
<line x1="701.10" y1="612.60" x2="701.10" y2="614.80" stroke="#303030" stroke-width="1"/>
<text transform="translate(700.80,624.62) scale(0.53,1)" font-size="10.5" fill="#202020" text-anchor="end" stroke="#202020" stroke-width="0.22">26</text>
<line x1="727.55" y1="612.60" x2="727.55" y2="614.80" stroke="#303030" stroke-width="1"/>
<text transform="translate(727.25,624.62) scale(0.53,1)" font-size="10.5" fill="#202020" text-anchor="end" stroke="#202020" stroke-width="0.22">27</text>
<line x1="754.00" y1="612.60" x2="754.00" y2="614.80" stroke="#303030" stroke-width="1"/>
<text transform="translate(753.70,624.62) scale(0.53,1)" font-size="10.5" fill="#202020" text-anchor="end" stroke="#202020" stroke-width="0.22">28</text>
<line x1="780.45" y1="612.60" x2="780.45" y2="614.80" stroke="#303030" stroke-width="1"/>
<text transform="translate(780.15,624.62) scale(0.53,1)" font-size="10.5" fill="#202020" text-anchor="end" stroke="#202020" stroke-width="0.22">29</text>
<line x1="806.90" y1="612.60" x2="806.90" y2="614.80" stroke="#303030" stroke-width="1"/>
<text transform="translate(806.60,624.62) scale(0.53,1)" font-size="10.5" fill="#202020" text-anchor="end" stroke="#202020" stroke-width="0.22">30</text>
<line x1="833.35" y1="612.60" x2="833.35" y2="614.80" stroke="#303030" stroke-width="1"/>
<text transform="translate(833.05,624.62) scale(0.53,1)" font-size="10.5" fill="#202020" text-anchor="end" stroke="#202020" stroke-width="0.22">31</text>
<text x="16.00" y="416.65" textLength="20.10" lengthAdjust="spacingAndGlyphs" font-size="10" fill="#16168c" stroke="#16168c" stroke-width="0.22">Balance</text>
<text transform="translate(38.30,416.65) scale(0.6,1)" font-size="10" fill="#505050" stroke="#505050" stroke-width="0.22">/</text>
<text x="42.50" y="416.65" textLength="17.10" lengthAdjust="spacingAndGlyphs" font-size="10" fill="#28b428" stroke="#28b428" stroke-width="0.22">Equity</text>
<polyline points="13.4,603.0 39.9,596.6 66.3,591.3 92.8,571.8 119.2,571.8 145.7,569.5 172.1,565.4 198.6,559.4 225.0,553.7 251.4,529.5 277.9,526.2 304.3,524.0 330.8,521.2 357.2,518.4 383.7,514.4 410.1,508.0 436.6,501.6 463.0,497.7 489.5,492.7 516.0,479.6 542.4,478.0 568.8,468.5 595.3,468.5 621.8,464.4 648.2,458.7 674.6,458.7 701.1,443.6 727.5,439.6 754.0,432.9 780.4,422.8" fill="none" stroke="#2fa52f" stroke-width="1.1" stroke-linejoin="round"/>
<polyline points="13.4,603.0 39.9,596.6 66.3,591.3 92.8,584.9 119.2,578.9 145.7,572.8 172.1,566.4 198.6,561.1 225.0,554.4 251.4,569.8 277.9,571.5 304.3,567.8 330.8,550.7 357.2,523.9 383.7,523.9 410.1,514.5 436.6,505.6 463.0,499.7 489.5,493.0 516.0,488.7 542.4,488.7 568.8,474.4 595.3,471.5 621.8,465.1 648.2,459.1 674.6,459.1 701.1,446.3 727.5,440.9 754.0,435.2 780.4,429.2" fill="none" stroke="#101088" stroke-width="2.3" stroke-linejoin="round"/>
<line x1="10.00" y1="631.30" x2="891.50" y2="631.30" stroke="#1c1c1c" stroke-width="1.5"/>
<rect x="10.00" y="632.10" width="882.00" height="21.60" fill="#efefef"/>
<rect x="0.00" y="653.70" width="894.00" height="4.20" fill="#f8f8f8"/>
<line x1="0.00" y1="658.30" x2="894.00" y2="658.30" stroke="#b2b2b2" stroke-width="1.1"/>
<rect x="0.00" y="659.00" width="894.00" height="2.00" fill="#fdfdfd"/>
<text transform="translate(18.80,646.49) scale(0.585,1)" font-size="13" fill="#7c7c7c" stroke="#7c7c7c" stroke-width="0.22">Settings</text>
<line x1="52.60" y1="635.00" x2="52.60" y2="650.00" stroke="#9a9a9a" stroke-width="1"/>
<text transform="translate(58.90,646.49) scale(0.585,1)" font-size="13" fill="#7c7c7c" stroke="#7c7c7c" stroke-width="0.22">Results</text>
<rect x="89.80" y="630.60" width="33.60" height="21.00" fill="#ffffff" stroke="#333333" stroke-width="1.2"/>
<rect x="90.50" y="629.60" width="32.20" height="2.60" fill="#ffffff"/>
<text transform="translate(96.50,646.49) scale(0.585,1)" font-size="13" fill="#111111" stroke="#111111" stroke-width="0.22">Graph</text>
<text transform="translate(130.30,646.49) scale(0.585,1)" font-size="13" fill="#7c7c7c" stroke="#7c7c7c" stroke-width="0.22">Report</text>
<line x1="160.00" y1="635.00" x2="160.00" y2="650.00" stroke="#9a9a9a" stroke-width="1"/>
<text transform="translate(166.00,646.49) scale(0.585,1)" font-size="13" fill="#7c7c7c" stroke="#7c7c7c" stroke-width="0.22">Journal</text>
<line x1="198.00" y1="635.00" x2="198.00" y2="650.00" stroke="#9a9a9a" stroke-width="1"/>
</svg>
</body>
</html>
